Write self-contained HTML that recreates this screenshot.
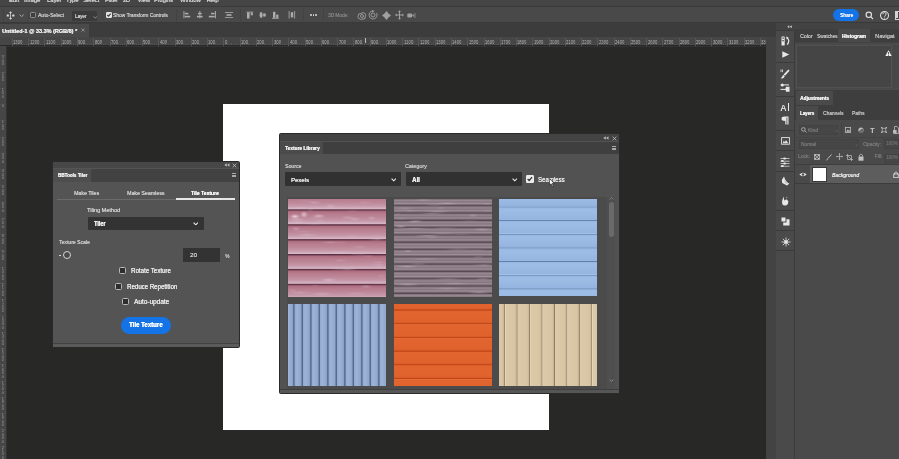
<!DOCTYPE html>
<html><head><meta charset="utf-8">
<style>
*{box-sizing:border-box;margin:0;padding:0}
html,body{width:899px;height:459px;overflow:hidden;background:#282827;font-family:"Liberation Sans",sans-serif;color:#ddd;position:relative}
.a{position:absolute}
.t{position:absolute;white-space:nowrap;line-height:1;text-shadow:0.25px 0 0 currentColor}
</style></head><body><div id="w" style="position:absolute;left:0;top:0;width:899px;height:459px;will-change:transform">
<div class="a" style="left:0px;top:0px;width:899px;height:6px;background:#454545"></div>
<div class="a" style="left:0px;top:5.5px;width:899px;height:1px;background:#3a3a3a"></div>
<div class="t" style="left:-11px;top:-2px;font-size:5.8px;color:#d4d4d4">File</div>
<div class="t" style="left:9px;top:-2px;font-size:5.8px;color:#d4d4d4">Edit</div>
<div class="t" style="left:24px;top:-2px;font-size:5.8px;color:#d4d4d4">Image</div>
<div class="t" style="left:47px;top:-2px;font-size:5.8px;color:#d4d4d4">Layer</div>
<div class="t" style="left:66px;top:-2px;font-size:5.8px;color:#d4d4d4">Type</div>
<div class="t" style="left:83px;top:-2px;font-size:5.8px;color:#d4d4d4">Select</div>
<div class="t" style="left:105px;top:-2px;font-size:5.8px;color:#d4d4d4">Filter</div>
<div class="t" style="left:122.5px;top:-2px;font-size:5.8px;color:#d4d4d4">3D</div>
<div class="t" style="left:137.5px;top:-2px;font-size:5.8px;color:#d4d4d4">View</div>
<div class="t" style="left:154px;top:-2px;font-size:5.8px;color:#d4d4d4">Plugins</div>
<div class="t" style="left:180px;top:-2px;font-size:5.8px;color:#d4d4d4">Window</div>
<div class="t" style="left:206.5px;top:-2px;font-size:5.8px;color:#d4d4d4">Help</div>
<div class="a" style="left:0px;top:6.5px;width:899px;height:16px;background:#494949"></div>
<div class="a" style="left:0px;top:22.3px;width:899px;height:1px;background:#393939"></div>
<div class="a" style="left:3px;top:9px;width:1px;height:12px;background:#424242"></div>
<div class="a" style="left:27.5px;top:9px;width:1px;height:12px;background:#424242"></div>
<div class="a" style="left:101.5px;top:9px;width:1px;height:12px;background:#444"></div>
<div class="a" style="left:176px;top:9px;width:1px;height:12px;background:#424242"></div>
<div class="a" style="left:240px;top:9px;width:1px;height:12px;background:#424242"></div>
<div class="a" style="left:302.5px;top:9px;width:1px;height:12px;background:#424242"></div>
<div class="a" style="left:322.5px;top:9px;width:1px;height:12px;background:#424242"></div>
<svg class="a" style="left:6px;top:10.5px;" width="9" height="9" viewBox="0 0 9 9"><g fill="#dadada"><rect x="4.15" y="1.6" width="0.8" height="5.8"/><path d="M4.55 0.2 L3 2 L6.1 2Z M4.55 8.8 L3 7 L6.1 7Z"/><rect x="0.7" y="3.6" width="2.2" height="1.9" rx="0.3"/><rect x="6.2" y="3.6" width="2.2" height="1.9" rx="0.3"/></g></svg>
<svg class="a" style="left:18.7px;top:13.8px;" width="5.4" height="3.6" viewBox="0 0 5.4 3.6"><path d="M0.6 0.6 L2.7 2.6 L4.800000000000001 0.6" stroke="#b0b0b0" stroke-width="0.9" fill="none"/></svg>
<div class="a" style="left:30.3px;top:12px;width:5.7px;height:5.6px;border:0.9px solid #8c8c8c;border-radius:1.2px;background:#3e3e3e"></div>
<div class="t" style="left:38px;top:13px;font-size:5.08px;transform-origin:0 0;transform:scaleX(0.99);color:#cccccc">Auto-Select</div>
<div class="a" style="left:71.8px;top:10.8px;width:25.1px;height:10.1px;background:#3b3b3b;border-radius:1px"></div>
<div class="t" style="left:75.4px;top:15px;font-size:4.66px;transform-origin:0 0;transform:scaleX(0.978);color:#dadada">Layer</div>
<svg class="a" style="left:92.5px;top:15.6px;" width="4.5" height="3" viewBox="0 0 4.5 3"><path d="M0.6 0.6 L2.25 2 L3.9 0.6" stroke="#a8a8a8" stroke-width="0.8" fill="none"/></svg>
<div class="a" style="left:105.8px;top:12px;width:5.8px;height:5.6px;background:#e4e4e4;border-radius:1.2px"></div>
<svg class="a" style="left:105.8px;top:12px;" width="6" height="6" viewBox="0 0 6 6"><path d="M1.3 2.9 L2.5 4.2 L4.7 1.6" stroke="#3a3a3a" stroke-width="1.1" fill="none"/></svg>
<div class="t" style="left:113.3px;top:13px;font-size:5.08px;transform-origin:0 0;transform:scaleX(0.955);color:#cecece">Show Transform Controls</div>
<svg class="a" style="left:0px;top:0px;" width="899" height="23" viewBox="0 0 899 23"><rect x="183.5" y="11" width="0.9" height="7.3" fill="#adadad"/><rect x="184.8" y="12.8" width="3.6" height="1.5" fill="#adadad"/><rect x="184.8" y="15.8" width="5.4" height="1.6" fill="#adadad"/><rect x="199.4" y="11" width="0.9" height="7.3" fill="#adadad"/><rect x="198" y="12.8" width="3.7" height="1.5" fill="#adadad"/><rect x="196.9" y="15.8" width="5.7" height="1.6" fill="#adadad"/><rect x="215" y="11" width="0.9" height="7.3" fill="#adadad"/><rect x="211" y="12.8" width="3.7" height="1.5" fill="#adadad"/><rect x="208.8" y="15.8" width="5.9" height="1.6" fill="#adadad"/><rect x="225" y="12" width="8.1" height="0.8" fill="#adadad"/><rect x="226.5" y="14.2" width="5" height="1.6" fill="#adadad"/><rect x="225" y="17" width="8.1" height="0.8" fill="#adadad"/><rect x="246.4" y="11.7" width="6.8" height="0.8" fill="#adadad"/><rect x="247" y="12.5" width="2.6" height="6" fill="#adadad"/><rect x="250.8" y="12.5" width="2" height="2.8" fill="#adadad"/><rect x="259.1" y="14.6" width="6.9" height="0.8" fill="#adadad"/><rect x="259.9" y="12.3" width="2.4" height="5.3" fill="#adadad"/><rect x="263.3" y="13.4" width="2.2" height="3.2" fill="#adadad"/><rect x="272" y="17.9" width="6.8" height="0.8" fill="#adadad"/><rect x="273" y="11.8" width="2.4" height="6.1" fill="#adadad"/><rect x="276.2" y="14.6" width="2.2" height="3.3" fill="#adadad"/><rect x="288.7" y="11" width="0.8" height="7.5" fill="#adadad"/><rect x="290.8" y="12.2" width="2.4" height="5.2" fill="#adadad"/><rect x="294.3" y="11" width="0.8" height="7.5" fill="#adadad"/></svg>
<div class="a" style="left:310.2px;top:13.9px;width:1.9px;height:1.9px;background:#dadada;border-radius:1px"></div>
<div class="a" style="left:312.6px;top:13.9px;width:1.9px;height:1.9px;background:#dadada;border-radius:1px"></div>
<div class="a" style="left:315.0px;top:13.9px;width:1.9px;height:1.9px;background:#dadada;border-radius:1px"></div>
<div class="t" style="left:327.5px;top:14px;font-size:4.8px;transform-origin:0 0;transform:scaleX(0.986);color:#858585">3D Mode:</div>
<svg class="a" style="left:356.5px;top:10.5px;" width="10" height="9" viewBox="0 0 10 9"><g fill="none" stroke="#a0a0a0" stroke-width="0.9"><path d="M1 5.5 Q1 2 4 2.5 Q6 0.5 8 2.5 Q9.5 4 8 6 Q9 8.5 6 8 Q3.5 9 2 7.5 Q0.5 7 1 5.5Z"/><circle cx="5" cy="5" r="1.5"/></g></svg>
<svg class="a" style="left:368px;top:10px;" width="10" height="10" viewBox="0 0 10 10"><g fill="none" stroke="#a0a0a0" stroke-width="0.9"><path d="M8.5 3 A4 4 0 1 1 5 1"/><circle cx="5" cy="5" r="2"/></g><path d="M4 0 L6.5 1 L4.3 2.4Z" fill="#a0a0a0"/></svg>
<svg class="a" style="left:382px;top:10.5px;" width="9" height="9" viewBox="0 0 9 9"><g fill="#a0a0a0"><path d="M4.5 0 L6.5 2.5 L9 4.5 L6.5 6.5 L4.5 9 L2.5 6.5 L0 4.5 L2.5 2.5Z"/></g></svg>
<svg class="a" style="left:394.5px;top:10px;" width="9" height="10" viewBox="0 0 9 10"><g fill="#a0a0a0"><rect x="4" y="2" width="1" height="6"/><rect x="1.5" y="4.5" width="6" height="1"/><path d="M4.5 0.2 L3 2 L6 2Z M4.5 9.8 L3 8 L6 8Z M0 5 L1.8 3.5 L1.8 6.5Z M9 5 L7.2 3.5 L7.2 6.5Z"/></g></svg>
<svg class="a" style="left:407px;top:11.5px;" width="9" height="7" viewBox="0 0 9 7"><g fill="#a0a0a0"><rect x="0.3" y="1.5" width="4.8" height="4" rx="1"/><path d="M5 3.5 L6.8 2 L6.8 5Z"/><rect x="7.6" y="1" width="0.7" height="5"/></g></svg>
<div class="a" style="left:833.2px;top:9px;width:26.2px;height:12.2px;background:#1473e6;border-radius:6.1px"></div>
<div class="t" style="left:839.6px;top:13px;font-size:5.76px;transform-origin:0 0;transform:scaleX(0.86);color:#fff">Share</div>
<svg class="a" style="left:864.5px;top:11px;" width="9" height="9" viewBox="0 0 9 9"><g fill="none" stroke="#e0e0e0" stroke-width="1.15"><circle cx="3.8" cy="3.8" r="2.7"/><line x1="5.8" y1="5.8" x2="8" y2="8"/></g></svg>
<svg class="a" style="left:878.7px;top:9.6px;" width="11" height="11" viewBox="0 0 11 11"><circle cx="5.5" cy="5.5" r="4" fill="none" stroke="#e0e0e0" stroke-width="1.05"/><path d="M3.8 4.2 Q3.8 2.6 5.5 2.6 Q7.2 2.6 7.2 4.1 Q7.2 5 6 5.6 L5.6 6.8" stroke="#dedede" stroke-width="0.9" fill="none"/><rect x="5.1" y="7.6" width="0.9" height="0.9" fill="#dedede"/></svg>
<div class="a" style="left:894.5px;top:10.5px;width:6px;height:9px;border:0.9px solid #d4d4d4"></div>
<div class="a" style="left:896px;top:12px;width:1.5px;height:6px;background:#d4d4d4"></div>
<div class="a" style="left:0px;top:23.2px;width:776px;height:14px;background:#3c3c3c"></div>
<div class="a" style="left:0px;top:23.5px;width:88.6px;height:13.4px;background:#4a4a4a"></div>
<div class="t" style="left:2.1px;top:28px;font-size:6.04px;transform-origin:0 0;transform:scaleX(0.913);color:#ececec;font-weight:bold">Untitled-1 @ 33.3% (RGB/8) *</div>
<svg class="a" style="left:80.6px;top:28.4px;" width="4" height="4" viewBox="0 0 4 4"><path d="M0.5 0.5 L3.5 3.5 M3.5 0.5 L0.5 3.5" stroke="#a8a8a8" stroke-width="0.7"/></svg>
<div class="a" style="left:0px;top:37.3px;width:766px;height:8.2px;background:#464646"></div>
<div class="a" style="left:0px;top:45.8px;width:766px;height:0.6px;background:#333"></div>
<div class="a" style="left:0px;top:46px;width:6.1px;height:413px;background:#464646"></div>
<div class="a" style="left:6.1px;top:46px;width:0.8px;height:413px;background:#333"></div>
<div class="a" style="left:11.97px;top:37.5px;width:0.7px;height:8px;background:#575757"></div>
<div class="t" style="left:13.37px;top:41px;font-size:4.66px;transform-origin:0 0;transform:scaleX(0.9);color:#b4b4b4;text-shadow:none">1300</div>
<div class="a" style="left:14.0px;top:44.1px;width:0.6px;height:1.4px;background:#555555"></div>
<div class="a" style="left:16.03px;top:44.1px;width:0.6px;height:1.4px;background:#555555"></div>
<div class="a" style="left:18.07px;top:44.1px;width:0.6px;height:1.4px;background:#555555"></div>
<div class="a" style="left:20.1px;top:43.3px;width:0.6px;height:2.2px;background:#555555"></div>
<div class="a" style="left:22.13px;top:44.1px;width:0.6px;height:1.4px;background:#555555"></div>
<div class="a" style="left:24.16px;top:44.1px;width:0.6px;height:1.4px;background:#555555"></div>
<div class="a" style="left:26.2px;top:44.1px;width:0.6px;height:1.4px;background:#555555"></div>
<div class="a" style="left:28.23px;top:37.5px;width:0.7px;height:8px;background:#575757"></div>
<div class="t" style="left:29.63px;top:41px;font-size:4.66px;transform-origin:0 0;transform:scaleX(0.9);color:#b4b4b4;text-shadow:none">1200</div>
<div class="a" style="left:30.26px;top:44.1px;width:0.6px;height:1.4px;background:#555555"></div>
<div class="a" style="left:32.29px;top:44.1px;width:0.6px;height:1.4px;background:#555555"></div>
<div class="a" style="left:34.33px;top:44.1px;width:0.6px;height:1.4px;background:#555555"></div>
<div class="a" style="left:36.36px;top:43.3px;width:0.6px;height:2.2px;background:#555555"></div>
<div class="a" style="left:38.39px;top:44.1px;width:0.6px;height:1.4px;background:#555555"></div>
<div class="a" style="left:40.42px;top:44.1px;width:0.6px;height:1.4px;background:#555555"></div>
<div class="a" style="left:42.46px;top:44.1px;width:0.6px;height:1.4px;background:#555555"></div>
<div class="a" style="left:44.49px;top:37.5px;width:0.7px;height:8px;background:#575757"></div>
<div class="t" style="left:45.89px;top:41px;font-size:4.66px;transform-origin:0 0;transform:scaleX(0.931);color:#b4b4b4;text-shadow:none">1100</div>
<div class="a" style="left:46.52px;top:44.1px;width:0.6px;height:1.4px;background:#555555"></div>
<div class="a" style="left:48.55px;top:44.1px;width:0.6px;height:1.4px;background:#555555"></div>
<div class="a" style="left:50.59px;top:44.1px;width:0.6px;height:1.4px;background:#555555"></div>
<div class="a" style="left:52.62px;top:43.3px;width:0.6px;height:2.2px;background:#555555"></div>
<div class="a" style="left:54.65px;top:44.1px;width:0.6px;height:1.4px;background:#555555"></div>
<div class="a" style="left:56.68px;top:44.1px;width:0.6px;height:1.4px;background:#555555"></div>
<div class="a" style="left:58.72px;top:44.1px;width:0.6px;height:1.4px;background:#555555"></div>
<div class="a" style="left:60.75px;top:37.5px;width:0.7px;height:8px;background:#575757"></div>
<div class="t" style="left:62.15px;top:41px;font-size:4.66px;transform-origin:0 0;transform:scaleX(0.9);color:#b4b4b4;text-shadow:none">1000</div>
<div class="a" style="left:62.78px;top:44.1px;width:0.6px;height:1.4px;background:#555555"></div>
<div class="a" style="left:64.81px;top:44.1px;width:0.6px;height:1.4px;background:#555555"></div>
<div class="a" style="left:66.85px;top:44.1px;width:0.6px;height:1.4px;background:#555555"></div>
<div class="a" style="left:68.88px;top:43.3px;width:0.6px;height:2.2px;background:#555555"></div>
<div class="a" style="left:70.91px;top:44.1px;width:0.6px;height:1.4px;background:#555555"></div>
<div class="a" style="left:72.94px;top:44.1px;width:0.6px;height:1.4px;background:#555555"></div>
<div class="a" style="left:74.98px;top:44.1px;width:0.6px;height:1.4px;background:#555555"></div>
<div class="a" style="left:77.01px;top:37.5px;width:0.7px;height:8px;background:#575757"></div>
<div class="t" style="left:78.41px;top:41px;font-size:4.66px;transform-origin:0 0;transform:scaleX(0.898);color:#b4b4b4;text-shadow:none">900</div>
<div class="a" style="left:79.04px;top:44.1px;width:0.6px;height:1.4px;background:#555555"></div>
<div class="a" style="left:81.07px;top:44.1px;width:0.6px;height:1.4px;background:#555555"></div>
<div class="a" style="left:83.11px;top:44.1px;width:0.6px;height:1.4px;background:#555555"></div>
<div class="a" style="left:85.14px;top:43.3px;width:0.6px;height:2.2px;background:#555555"></div>
<div class="a" style="left:87.17px;top:44.1px;width:0.6px;height:1.4px;background:#555555"></div>
<div class="a" style="left:89.2px;top:44.1px;width:0.6px;height:1.4px;background:#555555"></div>
<div class="a" style="left:91.24px;top:44.1px;width:0.6px;height:1.4px;background:#555555"></div>
<div class="a" style="left:93.27px;top:37.5px;width:0.7px;height:8px;background:#575757"></div>
<div class="t" style="left:94.67px;top:41px;font-size:4.66px;transform-origin:0 0;transform:scaleX(0.898);color:#b4b4b4;text-shadow:none">800</div>
<div class="a" style="left:95.3px;top:44.1px;width:0.6px;height:1.4px;background:#555555"></div>
<div class="a" style="left:97.33px;top:44.1px;width:0.6px;height:1.4px;background:#555555"></div>
<div class="a" style="left:99.37px;top:44.1px;width:0.6px;height:1.4px;background:#555555"></div>
<div class="a" style="left:101.4px;top:43.3px;width:0.6px;height:2.2px;background:#555555"></div>
<div class="a" style="left:103.43px;top:44.1px;width:0.6px;height:1.4px;background:#555555"></div>
<div class="a" style="left:105.46px;top:44.1px;width:0.6px;height:1.4px;background:#555555"></div>
<div class="a" style="left:107.5px;top:44.1px;width:0.6px;height:1.4px;background:#555555"></div>
<div class="a" style="left:109.53px;top:37.5px;width:0.7px;height:8px;background:#575757"></div>
<div class="t" style="left:110.93px;top:41px;font-size:4.66px;transform-origin:0 0;transform:scaleX(0.898);color:#b4b4b4;text-shadow:none">700</div>
<div class="a" style="left:111.56px;top:44.1px;width:0.6px;height:1.4px;background:#555555"></div>
<div class="a" style="left:113.59px;top:44.1px;width:0.6px;height:1.4px;background:#555555"></div>
<div class="a" style="left:115.63px;top:44.1px;width:0.6px;height:1.4px;background:#555555"></div>
<div class="a" style="left:117.66px;top:43.3px;width:0.6px;height:2.2px;background:#555555"></div>
<div class="a" style="left:119.69px;top:44.1px;width:0.6px;height:1.4px;background:#555555"></div>
<div class="a" style="left:121.72px;top:44.1px;width:0.6px;height:1.4px;background:#555555"></div>
<div class="a" style="left:123.76px;top:44.1px;width:0.6px;height:1.4px;background:#555555"></div>
<div class="a" style="left:125.79px;top:37.5px;width:0.7px;height:8px;background:#575757"></div>
<div class="t" style="left:127.19px;top:41px;font-size:4.66px;transform-origin:0 0;transform:scaleX(0.898);color:#b4b4b4;text-shadow:none">600</div>
<div class="a" style="left:127.82px;top:44.1px;width:0.6px;height:1.4px;background:#555555"></div>
<div class="a" style="left:129.85px;top:44.1px;width:0.6px;height:1.4px;background:#555555"></div>
<div class="a" style="left:131.89px;top:44.1px;width:0.6px;height:1.4px;background:#555555"></div>
<div class="a" style="left:133.92px;top:43.3px;width:0.6px;height:2.2px;background:#555555"></div>
<div class="a" style="left:135.95px;top:44.1px;width:0.6px;height:1.4px;background:#555555"></div>
<div class="a" style="left:137.98px;top:44.1px;width:0.6px;height:1.4px;background:#555555"></div>
<div class="a" style="left:140.02px;top:44.1px;width:0.6px;height:1.4px;background:#555555"></div>
<div class="a" style="left:142.05px;top:37.5px;width:0.7px;height:8px;background:#575757"></div>
<div class="t" style="left:143.45px;top:41px;font-size:4.66px;transform-origin:0 0;transform:scaleX(0.898);color:#b4b4b4;text-shadow:none">500</div>
<div class="a" style="left:144.08px;top:44.1px;width:0.6px;height:1.4px;background:#555555"></div>
<div class="a" style="left:146.11px;top:44.1px;width:0.6px;height:1.4px;background:#555555"></div>
<div class="a" style="left:148.15px;top:44.1px;width:0.6px;height:1.4px;background:#555555"></div>
<div class="a" style="left:150.18px;top:43.3px;width:0.6px;height:2.2px;background:#555555"></div>
<div class="a" style="left:152.21px;top:44.1px;width:0.6px;height:1.4px;background:#555555"></div>
<div class="a" style="left:154.24px;top:44.1px;width:0.6px;height:1.4px;background:#555555"></div>
<div class="a" style="left:156.28px;top:44.1px;width:0.6px;height:1.4px;background:#555555"></div>
<div class="a" style="left:158.31px;top:37.5px;width:0.7px;height:8px;background:#575757"></div>
<div class="t" style="left:159.71px;top:41px;font-size:4.66px;transform-origin:0 0;transform:scaleX(0.898);color:#b4b4b4;text-shadow:none">400</div>
<div class="a" style="left:160.34px;top:44.1px;width:0.6px;height:1.4px;background:#555555"></div>
<div class="a" style="left:162.38px;top:44.1px;width:0.6px;height:1.4px;background:#555555"></div>
<div class="a" style="left:164.41px;top:44.1px;width:0.6px;height:1.4px;background:#555555"></div>
<div class="a" style="left:166.44px;top:43.3px;width:0.6px;height:2.2px;background:#555555"></div>
<div class="a" style="left:168.47px;top:44.1px;width:0.6px;height:1.4px;background:#555555"></div>
<div class="a" style="left:170.5px;top:44.1px;width:0.6px;height:1.4px;background:#555555"></div>
<div class="a" style="left:172.54px;top:44.1px;width:0.6px;height:1.4px;background:#555555"></div>
<div class="a" style="left:174.57px;top:37.5px;width:0.7px;height:8px;background:#575757"></div>
<div class="t" style="left:175.97px;top:41px;font-size:4.66px;transform-origin:0 0;transform:scaleX(0.898);color:#b4b4b4;text-shadow:none">300</div>
<div class="a" style="left:176.6px;top:44.1px;width:0.6px;height:1.4px;background:#555555"></div>
<div class="a" style="left:178.63px;top:44.1px;width:0.6px;height:1.4px;background:#555555"></div>
<div class="a" style="left:180.67px;top:44.1px;width:0.6px;height:1.4px;background:#555555"></div>
<div class="a" style="left:182.7px;top:43.3px;width:0.6px;height:2.2px;background:#555555"></div>
<div class="a" style="left:184.73px;top:44.1px;width:0.6px;height:1.4px;background:#555555"></div>
<div class="a" style="left:186.76px;top:44.1px;width:0.6px;height:1.4px;background:#555555"></div>
<div class="a" style="left:188.8px;top:44.1px;width:0.6px;height:1.4px;background:#555555"></div>
<div class="a" style="left:190.83px;top:37.5px;width:0.7px;height:8px;background:#575757"></div>
<div class="t" style="left:192.23px;top:41px;font-size:4.66px;transform-origin:0 0;transform:scaleX(0.898);color:#b4b4b4;text-shadow:none">200</div>
<div class="a" style="left:192.86px;top:44.1px;width:0.6px;height:1.4px;background:#555555"></div>
<div class="a" style="left:194.89px;top:44.1px;width:0.6px;height:1.4px;background:#555555"></div>
<div class="a" style="left:196.93px;top:44.1px;width:0.6px;height:1.4px;background:#555555"></div>
<div class="a" style="left:198.96px;top:43.3px;width:0.6px;height:2.2px;background:#555555"></div>
<div class="a" style="left:200.99px;top:44.1px;width:0.6px;height:1.4px;background:#555555"></div>
<div class="a" style="left:203.02px;top:44.1px;width:0.6px;height:1.4px;background:#555555"></div>
<div class="a" style="left:205.06px;top:44.1px;width:0.6px;height:1.4px;background:#555555"></div>
<div class="a" style="left:207.09px;top:37.5px;width:0.7px;height:8px;background:#575757"></div>
<div class="t" style="left:208.49px;top:41px;font-size:4.66px;transform-origin:0 0;transform:scaleX(0.898);color:#b4b4b4;text-shadow:none">100</div>
<div class="a" style="left:209.12px;top:44.1px;width:0.6px;height:1.4px;background:#555555"></div>
<div class="a" style="left:211.16px;top:44.1px;width:0.6px;height:1.4px;background:#555555"></div>
<div class="a" style="left:213.19px;top:44.1px;width:0.6px;height:1.4px;background:#555555"></div>
<div class="a" style="left:215.22px;top:43.3px;width:0.6px;height:2.2px;background:#555555"></div>
<div class="a" style="left:217.25px;top:44.1px;width:0.6px;height:1.4px;background:#555555"></div>
<div class="a" style="left:219.28px;top:44.1px;width:0.6px;height:1.4px;background:#555555"></div>
<div class="a" style="left:221.32px;top:44.1px;width:0.6px;height:1.4px;background:#555555"></div>
<div class="a" style="left:223.35px;top:37.5px;width:0.7px;height:8px;background:#575757"></div>
<div class="t" style="left:224.75px;top:41px;font-size:4.66px;transform-origin:0 0;transform:scaleX(0.898);color:#b4b4b4;text-shadow:none">0</div>
<div class="a" style="left:225.38px;top:44.1px;width:0.6px;height:1.4px;background:#555555"></div>
<div class="a" style="left:227.41px;top:44.1px;width:0.6px;height:1.4px;background:#555555"></div>
<div class="a" style="left:229.45px;top:44.1px;width:0.6px;height:1.4px;background:#555555"></div>
<div class="a" style="left:231.48px;top:43.3px;width:0.6px;height:2.2px;background:#555555"></div>
<div class="a" style="left:233.51px;top:44.1px;width:0.6px;height:1.4px;background:#555555"></div>
<div class="a" style="left:235.54px;top:44.1px;width:0.6px;height:1.4px;background:#555555"></div>
<div class="a" style="left:237.58px;top:44.1px;width:0.6px;height:1.4px;background:#555555"></div>
<div class="a" style="left:239.61px;top:37.5px;width:0.7px;height:8px;background:#575757"></div>
<div class="t" style="left:241.01px;top:41px;font-size:4.66px;transform-origin:0 0;transform:scaleX(0.898);color:#b4b4b4;text-shadow:none">100</div>
<div class="a" style="left:241.64px;top:44.1px;width:0.6px;height:1.4px;background:#555555"></div>
<div class="a" style="left:243.67px;top:44.1px;width:0.6px;height:1.4px;background:#555555"></div>
<div class="a" style="left:245.71px;top:44.1px;width:0.6px;height:1.4px;background:#555555"></div>
<div class="a" style="left:247.74px;top:43.3px;width:0.6px;height:2.2px;background:#555555"></div>
<div class="a" style="left:249.77px;top:44.1px;width:0.6px;height:1.4px;background:#555555"></div>
<div class="a" style="left:251.8px;top:44.1px;width:0.6px;height:1.4px;background:#555555"></div>
<div class="a" style="left:253.84px;top:44.1px;width:0.6px;height:1.4px;background:#555555"></div>
<div class="a" style="left:255.87px;top:37.5px;width:0.7px;height:8px;background:#575757"></div>
<div class="t" style="left:257.27px;top:41px;font-size:4.66px;transform-origin:0 0;transform:scaleX(0.898);color:#b4b4b4;text-shadow:none">200</div>
<div class="a" style="left:257.9px;top:44.1px;width:0.6px;height:1.4px;background:#555555"></div>
<div class="a" style="left:259.94px;top:44.1px;width:0.6px;height:1.4px;background:#555555"></div>
<div class="a" style="left:261.97px;top:44.1px;width:0.6px;height:1.4px;background:#555555"></div>
<div class="a" style="left:264.0px;top:43.3px;width:0.6px;height:2.2px;background:#555555"></div>
<div class="a" style="left:266.03px;top:44.1px;width:0.6px;height:1.4px;background:#555555"></div>
<div class="a" style="left:268.06px;top:44.1px;width:0.6px;height:1.4px;background:#555555"></div>
<div class="a" style="left:270.1px;top:44.1px;width:0.6px;height:1.4px;background:#555555"></div>
<div class="a" style="left:272.13px;top:37.5px;width:0.7px;height:8px;background:#575757"></div>
<div class="t" style="left:273.53px;top:41px;font-size:4.66px;transform-origin:0 0;transform:scaleX(0.898);color:#b4b4b4;text-shadow:none">300</div>
<div class="a" style="left:274.16px;top:44.1px;width:0.6px;height:1.4px;background:#555555"></div>
<div class="a" style="left:276.19px;top:44.1px;width:0.6px;height:1.4px;background:#555555"></div>
<div class="a" style="left:278.23px;top:44.1px;width:0.6px;height:1.4px;background:#555555"></div>
<div class="a" style="left:280.26px;top:43.3px;width:0.6px;height:2.2px;background:#555555"></div>
<div class="a" style="left:282.29px;top:44.1px;width:0.6px;height:1.4px;background:#555555"></div>
<div class="a" style="left:284.32px;top:44.1px;width:0.6px;height:1.4px;background:#555555"></div>
<div class="a" style="left:286.36px;top:44.1px;width:0.6px;height:1.4px;background:#555555"></div>
<div class="a" style="left:288.39px;top:37.5px;width:0.7px;height:8px;background:#575757"></div>
<div class="t" style="left:289.79px;top:41px;font-size:4.66px;transform-origin:0 0;transform:scaleX(0.898);color:#b4b4b4;text-shadow:none">400</div>
<div class="a" style="left:290.42px;top:44.1px;width:0.6px;height:1.4px;background:#555555"></div>
<div class="a" style="left:292.45px;top:44.1px;width:0.6px;height:1.4px;background:#555555"></div>
<div class="a" style="left:294.49px;top:44.1px;width:0.6px;height:1.4px;background:#555555"></div>
<div class="a" style="left:296.52px;top:43.3px;width:0.6px;height:2.2px;background:#555555"></div>
<div class="a" style="left:298.55px;top:44.1px;width:0.6px;height:1.4px;background:#555555"></div>
<div class="a" style="left:300.58px;top:44.1px;width:0.6px;height:1.4px;background:#555555"></div>
<div class="a" style="left:302.62px;top:44.1px;width:0.6px;height:1.4px;background:#555555"></div>
<div class="a" style="left:304.65px;top:37.5px;width:0.7px;height:8px;background:#575757"></div>
<div class="t" style="left:306.05px;top:41px;font-size:4.66px;transform-origin:0 0;transform:scaleX(0.898);color:#b4b4b4;text-shadow:none">500</div>
<div class="a" style="left:306.68px;top:44.1px;width:0.6px;height:1.4px;background:#555555"></div>
<div class="a" style="left:308.71px;top:44.1px;width:0.6px;height:1.4px;background:#555555"></div>
<div class="a" style="left:310.75px;top:44.1px;width:0.6px;height:1.4px;background:#555555"></div>
<div class="a" style="left:312.78px;top:43.3px;width:0.6px;height:2.2px;background:#555555"></div>
<div class="a" style="left:314.81px;top:44.1px;width:0.6px;height:1.4px;background:#555555"></div>
<div class="a" style="left:316.84px;top:44.1px;width:0.6px;height:1.4px;background:#555555"></div>
<div class="a" style="left:318.88px;top:44.1px;width:0.6px;height:1.4px;background:#555555"></div>
<div class="a" style="left:320.91px;top:37.5px;width:0.7px;height:8px;background:#575757"></div>
<div class="t" style="left:322.31px;top:41px;font-size:4.66px;transform-origin:0 0;transform:scaleX(0.898);color:#b4b4b4;text-shadow:none">600</div>
<div class="a" style="left:322.94px;top:44.1px;width:0.6px;height:1.4px;background:#555555"></div>
<div class="a" style="left:324.97px;top:44.1px;width:0.6px;height:1.4px;background:#555555"></div>
<div class="a" style="left:327.01px;top:44.1px;width:0.6px;height:1.4px;background:#555555"></div>
<div class="a" style="left:329.04px;top:43.3px;width:0.6px;height:2.2px;background:#555555"></div>
<div class="a" style="left:331.07px;top:44.1px;width:0.6px;height:1.4px;background:#555555"></div>
<div class="a" style="left:333.1px;top:44.1px;width:0.6px;height:1.4px;background:#555555"></div>
<div class="a" style="left:335.14px;top:44.1px;width:0.6px;height:1.4px;background:#555555"></div>
<div class="a" style="left:337.17px;top:37.5px;width:0.7px;height:8px;background:#575757"></div>
<div class="t" style="left:338.57px;top:41px;font-size:4.66px;transform-origin:0 0;transform:scaleX(0.898);color:#b4b4b4;text-shadow:none">700</div>
<div class="a" style="left:339.2px;top:44.1px;width:0.6px;height:1.4px;background:#555555"></div>
<div class="a" style="left:341.24px;top:44.1px;width:0.6px;height:1.4px;background:#555555"></div>
<div class="a" style="left:343.27px;top:44.1px;width:0.6px;height:1.4px;background:#555555"></div>
<div class="a" style="left:345.3px;top:43.3px;width:0.6px;height:2.2px;background:#555555"></div>
<div class="a" style="left:347.33px;top:44.1px;width:0.6px;height:1.4px;background:#555555"></div>
<div class="a" style="left:349.37px;top:44.1px;width:0.6px;height:1.4px;background:#555555"></div>
<div class="a" style="left:351.4px;top:44.1px;width:0.6px;height:1.4px;background:#555555"></div>
<div class="a" style="left:353.43px;top:37.5px;width:0.7px;height:8px;background:#575757"></div>
<div class="t" style="left:354.83px;top:41px;font-size:4.66px;transform-origin:0 0;transform:scaleX(0.898);color:#b4b4b4;text-shadow:none">800</div>
<div class="a" style="left:355.46px;top:44.1px;width:0.6px;height:1.4px;background:#555555"></div>
<div class="a" style="left:357.5px;top:44.1px;width:0.6px;height:1.4px;background:#555555"></div>
<div class="a" style="left:359.53px;top:44.1px;width:0.6px;height:1.4px;background:#555555"></div>
<div class="a" style="left:361.56px;top:43.3px;width:0.6px;height:2.2px;background:#555555"></div>
<div class="a" style="left:363.59px;top:44.1px;width:0.6px;height:1.4px;background:#555555"></div>
<div class="a" style="left:365.62px;top:44.1px;width:0.6px;height:1.4px;background:#555555"></div>
<div class="a" style="left:367.66px;top:44.1px;width:0.6px;height:1.4px;background:#555555"></div>
<div class="a" style="left:369.69px;top:37.5px;width:0.7px;height:8px;background:#575757"></div>
<div class="t" style="left:371.09px;top:41px;font-size:4.66px;transform-origin:0 0;transform:scaleX(0.898);color:#b4b4b4;text-shadow:none">900</div>
<div class="a" style="left:371.72px;top:44.1px;width:0.6px;height:1.4px;background:#555555"></div>
<div class="a" style="left:373.75px;top:44.1px;width:0.6px;height:1.4px;background:#555555"></div>
<div class="a" style="left:375.79px;top:44.1px;width:0.6px;height:1.4px;background:#555555"></div>
<div class="a" style="left:377.82px;top:43.3px;width:0.6px;height:2.2px;background:#555555"></div>
<div class="a" style="left:379.85px;top:44.1px;width:0.6px;height:1.4px;background:#555555"></div>
<div class="a" style="left:381.88px;top:44.1px;width:0.6px;height:1.4px;background:#555555"></div>
<div class="a" style="left:383.92px;top:44.1px;width:0.6px;height:1.4px;background:#555555"></div>
<div class="a" style="left:385.95px;top:37.5px;width:0.7px;height:8px;background:#575757"></div>
<div class="t" style="left:387.35px;top:41px;font-size:4.66px;transform-origin:0 0;transform:scaleX(0.9);color:#b4b4b4;text-shadow:none">1000</div>
<div class="a" style="left:387.98px;top:44.1px;width:0.6px;height:1.4px;background:#555555"></div>
<div class="a" style="left:390.02px;top:44.1px;width:0.6px;height:1.4px;background:#555555"></div>
<div class="a" style="left:392.05px;top:44.1px;width:0.6px;height:1.4px;background:#555555"></div>
<div class="a" style="left:394.08px;top:43.3px;width:0.6px;height:2.2px;background:#555555"></div>
<div class="a" style="left:396.11px;top:44.1px;width:0.6px;height:1.4px;background:#555555"></div>
<div class="a" style="left:398.15px;top:44.1px;width:0.6px;height:1.4px;background:#555555"></div>
<div class="a" style="left:400.18px;top:44.1px;width:0.6px;height:1.4px;background:#555555"></div>
<div class="a" style="left:402.21px;top:37.5px;width:0.7px;height:8px;background:#575757"></div>
<div class="t" style="left:403.61px;top:41px;font-size:4.66px;transform-origin:0 0;transform:scaleX(0.931);color:#b4b4b4;text-shadow:none">1100</div>
<div class="a" style="left:404.24px;top:44.1px;width:0.6px;height:1.4px;background:#555555"></div>
<div class="a" style="left:406.28px;top:44.1px;width:0.6px;height:1.4px;background:#555555"></div>
<div class="a" style="left:408.31px;top:44.1px;width:0.6px;height:1.4px;background:#555555"></div>
<div class="a" style="left:410.34px;top:43.3px;width:0.6px;height:2.2px;background:#555555"></div>
<div class="a" style="left:412.37px;top:44.1px;width:0.6px;height:1.4px;background:#555555"></div>
<div class="a" style="left:414.41px;top:44.1px;width:0.6px;height:1.4px;background:#555555"></div>
<div class="a" style="left:416.44px;top:44.1px;width:0.6px;height:1.4px;background:#555555"></div>
<div class="a" style="left:418.47px;top:37.5px;width:0.7px;height:8px;background:#575757"></div>
<div class="t" style="left:419.87px;top:41px;font-size:4.66px;transform-origin:0 0;transform:scaleX(0.9);color:#b4b4b4;text-shadow:none">1200</div>
<div class="a" style="left:420.5px;top:44.1px;width:0.6px;height:1.4px;background:#555555"></div>
<div class="a" style="left:422.54px;top:44.1px;width:0.6px;height:1.4px;background:#555555"></div>
<div class="a" style="left:424.57px;top:44.1px;width:0.6px;height:1.4px;background:#555555"></div>
<div class="a" style="left:426.6px;top:43.3px;width:0.6px;height:2.2px;background:#555555"></div>
<div class="a" style="left:428.63px;top:44.1px;width:0.6px;height:1.4px;background:#555555"></div>
<div class="a" style="left:430.67px;top:44.1px;width:0.6px;height:1.4px;background:#555555"></div>
<div class="a" style="left:432.7px;top:44.1px;width:0.6px;height:1.4px;background:#555555"></div>
<div class="a" style="left:434.73px;top:37.5px;width:0.7px;height:8px;background:#575757"></div>
<div class="t" style="left:436.13px;top:41px;font-size:4.66px;transform-origin:0 0;transform:scaleX(0.9);color:#b4b4b4;text-shadow:none">1300</div>
<div class="a" style="left:436.76px;top:44.1px;width:0.6px;height:1.4px;background:#555555"></div>
<div class="a" style="left:438.8px;top:44.1px;width:0.6px;height:1.4px;background:#555555"></div>
<div class="a" style="left:440.83px;top:44.1px;width:0.6px;height:1.4px;background:#555555"></div>
<div class="a" style="left:442.86px;top:43.3px;width:0.6px;height:2.2px;background:#555555"></div>
<div class="a" style="left:444.89px;top:44.1px;width:0.6px;height:1.4px;background:#555555"></div>
<div class="a" style="left:446.93px;top:44.1px;width:0.6px;height:1.4px;background:#555555"></div>
<div class="a" style="left:448.96px;top:44.1px;width:0.6px;height:1.4px;background:#555555"></div>
<div class="a" style="left:450.99px;top:37.5px;width:0.7px;height:8px;background:#575757"></div>
<div class="t" style="left:452.39px;top:41px;font-size:4.66px;transform-origin:0 0;transform:scaleX(0.9);color:#b4b4b4;text-shadow:none">1400</div>
<div class="a" style="left:453.02px;top:44.1px;width:0.6px;height:1.4px;background:#555555"></div>
<div class="a" style="left:455.06px;top:44.1px;width:0.6px;height:1.4px;background:#555555"></div>
<div class="a" style="left:457.09px;top:44.1px;width:0.6px;height:1.4px;background:#555555"></div>
<div class="a" style="left:459.12px;top:43.3px;width:0.6px;height:2.2px;background:#555555"></div>
<div class="a" style="left:461.15px;top:44.1px;width:0.6px;height:1.4px;background:#555555"></div>
<div class="a" style="left:463.19px;top:44.1px;width:0.6px;height:1.4px;background:#555555"></div>
<div class="a" style="left:465.22px;top:44.1px;width:0.6px;height:1.4px;background:#555555"></div>
<div class="a" style="left:467.25px;top:37.5px;width:0.7px;height:8px;background:#575757"></div>
<div class="t" style="left:468.65px;top:41px;font-size:4.66px;transform-origin:0 0;transform:scaleX(0.9);color:#b4b4b4;text-shadow:none">1500</div>
<div class="a" style="left:469.28px;top:44.1px;width:0.6px;height:1.4px;background:#555555"></div>
<div class="a" style="left:471.31px;top:44.1px;width:0.6px;height:1.4px;background:#555555"></div>
<div class="a" style="left:473.35px;top:44.1px;width:0.6px;height:1.4px;background:#555555"></div>
<div class="a" style="left:475.38px;top:43.3px;width:0.6px;height:2.2px;background:#555555"></div>
<div class="a" style="left:477.41px;top:44.1px;width:0.6px;height:1.4px;background:#555555"></div>
<div class="a" style="left:479.44px;top:44.1px;width:0.6px;height:1.4px;background:#555555"></div>
<div class="a" style="left:481.48px;top:44.1px;width:0.6px;height:1.4px;background:#555555"></div>
<div class="a" style="left:483.51px;top:37.5px;width:0.7px;height:8px;background:#575757"></div>
<div class="t" style="left:484.91px;top:41px;font-size:4.66px;transform-origin:0 0;transform:scaleX(0.9);color:#b4b4b4;text-shadow:none">1600</div>
<div class="a" style="left:485.54px;top:44.1px;width:0.6px;height:1.4px;background:#555555"></div>
<div class="a" style="left:487.57px;top:44.1px;width:0.6px;height:1.4px;background:#555555"></div>
<div class="a" style="left:489.61px;top:44.1px;width:0.6px;height:1.4px;background:#555555"></div>
<div class="a" style="left:491.64px;top:43.3px;width:0.6px;height:2.2px;background:#555555"></div>
<div class="a" style="left:493.67px;top:44.1px;width:0.6px;height:1.4px;background:#555555"></div>
<div class="a" style="left:495.7px;top:44.1px;width:0.6px;height:1.4px;background:#555555"></div>
<div class="a" style="left:497.74px;top:44.1px;width:0.6px;height:1.4px;background:#555555"></div>
<div class="a" style="left:499.77px;top:37.5px;width:0.7px;height:8px;background:#575757"></div>
<div class="t" style="left:501.17px;top:41px;font-size:4.66px;transform-origin:0 0;transform:scaleX(0.9);color:#b4b4b4;text-shadow:none">1700</div>
<div class="a" style="left:501.8px;top:44.1px;width:0.6px;height:1.4px;background:#555555"></div>
<div class="a" style="left:503.83px;top:44.1px;width:0.6px;height:1.4px;background:#555555"></div>
<div class="a" style="left:505.87px;top:44.1px;width:0.6px;height:1.4px;background:#555555"></div>
<div class="a" style="left:507.9px;top:43.3px;width:0.6px;height:2.2px;background:#555555"></div>
<div class="a" style="left:509.93px;top:44.1px;width:0.6px;height:1.4px;background:#555555"></div>
<div class="a" style="left:511.96px;top:44.1px;width:0.6px;height:1.4px;background:#555555"></div>
<div class="a" style="left:514.0px;top:44.1px;width:0.6px;height:1.4px;background:#555555"></div>
<div class="a" style="left:516.03px;top:37.5px;width:0.7px;height:8px;background:#575757"></div>
<div class="t" style="left:517.43px;top:41px;font-size:4.66px;transform-origin:0 0;transform:scaleX(0.9);color:#b4b4b4;text-shadow:none">1800</div>
<div class="a" style="left:518.06px;top:44.1px;width:0.6px;height:1.4px;background:#555555"></div>
<div class="a" style="left:520.1px;top:44.1px;width:0.6px;height:1.4px;background:#555555"></div>
<div class="a" style="left:522.13px;top:44.1px;width:0.6px;height:1.4px;background:#555555"></div>
<div class="a" style="left:524.16px;top:43.3px;width:0.6px;height:2.2px;background:#555555"></div>
<div class="a" style="left:526.19px;top:44.1px;width:0.6px;height:1.4px;background:#555555"></div>
<div class="a" style="left:528.23px;top:44.1px;width:0.6px;height:1.4px;background:#555555"></div>
<div class="a" style="left:530.26px;top:44.1px;width:0.6px;height:1.4px;background:#555555"></div>
<div class="a" style="left:532.29px;top:37.5px;width:0.7px;height:8px;background:#575757"></div>
<div class="t" style="left:533.69px;top:41px;font-size:4.66px;transform-origin:0 0;transform:scaleX(0.9);color:#b4b4b4;text-shadow:none">1900</div>
<div class="a" style="left:534.32px;top:44.1px;width:0.6px;height:1.4px;background:#555555"></div>
<div class="a" style="left:536.36px;top:44.1px;width:0.6px;height:1.4px;background:#555555"></div>
<div class="a" style="left:538.39px;top:44.1px;width:0.6px;height:1.4px;background:#555555"></div>
<div class="a" style="left:540.42px;top:43.3px;width:0.6px;height:2.2px;background:#555555"></div>
<div class="a" style="left:542.45px;top:44.1px;width:0.6px;height:1.4px;background:#555555"></div>
<div class="a" style="left:544.49px;top:44.1px;width:0.6px;height:1.4px;background:#555555"></div>
<div class="a" style="left:546.52px;top:44.1px;width:0.6px;height:1.4px;background:#555555"></div>
<div class="a" style="left:548.55px;top:37.5px;width:0.7px;height:8px;background:#575757"></div>
<div class="t" style="left:549.95px;top:41px;font-size:4.66px;transform-origin:0 0;transform:scaleX(0.9);color:#b4b4b4;text-shadow:none">2000</div>
<div class="a" style="left:550.58px;top:44.1px;width:0.6px;height:1.4px;background:#555555"></div>
<div class="a" style="left:552.62px;top:44.1px;width:0.6px;height:1.4px;background:#555555"></div>
<div class="a" style="left:554.65px;top:44.1px;width:0.6px;height:1.4px;background:#555555"></div>
<div class="a" style="left:556.68px;top:43.3px;width:0.6px;height:2.2px;background:#555555"></div>
<div class="a" style="left:558.71px;top:44.1px;width:0.6px;height:1.4px;background:#555555"></div>
<div class="a" style="left:560.75px;top:44.1px;width:0.6px;height:1.4px;background:#555555"></div>
<div class="a" style="left:562.78px;top:44.1px;width:0.6px;height:1.4px;background:#555555"></div>
<div class="a" style="left:564.81px;top:37.5px;width:0.7px;height:8px;background:#575757"></div>
<div class="t" style="left:566.21px;top:41px;font-size:4.66px;transform-origin:0 0;transform:scaleX(0.9);color:#b4b4b4;text-shadow:none">2100</div>
<div class="a" style="left:566.84px;top:44.1px;width:0.6px;height:1.4px;background:#555555"></div>
<div class="a" style="left:568.88px;top:44.1px;width:0.6px;height:1.4px;background:#555555"></div>
<div class="a" style="left:570.91px;top:44.1px;width:0.6px;height:1.4px;background:#555555"></div>
<div class="a" style="left:572.94px;top:43.3px;width:0.6px;height:2.2px;background:#555555"></div>
<div class="a" style="left:574.97px;top:44.1px;width:0.6px;height:1.4px;background:#555555"></div>
<div class="a" style="left:577.01px;top:44.1px;width:0.6px;height:1.4px;background:#555555"></div>
<div class="a" style="left:579.04px;top:44.1px;width:0.6px;height:1.4px;background:#555555"></div>
<div class="a" style="left:581.07px;top:37.5px;width:0.7px;height:8px;background:#575757"></div>
<div class="t" style="left:582.47px;top:41px;font-size:4.66px;transform-origin:0 0;transform:scaleX(0.9);color:#b4b4b4;text-shadow:none">2200</div>
<div class="a" style="left:583.1px;top:44.1px;width:0.6px;height:1.4px;background:#555555"></div>
<div class="a" style="left:585.14px;top:44.1px;width:0.6px;height:1.4px;background:#555555"></div>
<div class="a" style="left:587.17px;top:44.1px;width:0.6px;height:1.4px;background:#555555"></div>
<div class="a" style="left:589.2px;top:43.3px;width:0.6px;height:2.2px;background:#555555"></div>
<div class="a" style="left:591.23px;top:44.1px;width:0.6px;height:1.4px;background:#555555"></div>
<div class="a" style="left:593.27px;top:44.1px;width:0.6px;height:1.4px;background:#555555"></div>
<div class="a" style="left:595.3px;top:44.1px;width:0.6px;height:1.4px;background:#555555"></div>
<div class="a" style="left:597.33px;top:37.5px;width:0.7px;height:8px;background:#575757"></div>
<div class="t" style="left:598.73px;top:41px;font-size:4.66px;transform-origin:0 0;transform:scaleX(0.9);color:#b4b4b4;text-shadow:none">2300</div>
<div class="a" style="left:599.36px;top:44.1px;width:0.6px;height:1.4px;background:#555555"></div>
<div class="a" style="left:601.4px;top:44.1px;width:0.6px;height:1.4px;background:#555555"></div>
<div class="a" style="left:603.43px;top:44.1px;width:0.6px;height:1.4px;background:#555555"></div>
<div class="a" style="left:605.46px;top:43.3px;width:0.6px;height:2.2px;background:#555555"></div>
<div class="a" style="left:607.49px;top:44.1px;width:0.6px;height:1.4px;background:#555555"></div>
<div class="a" style="left:609.53px;top:44.1px;width:0.6px;height:1.4px;background:#555555"></div>
<div class="a" style="left:611.56px;top:44.1px;width:0.6px;height:1.4px;background:#555555"></div>
<div class="a" style="left:613.59px;top:37.5px;width:0.7px;height:8px;background:#575757"></div>
<div class="t" style="left:614.99px;top:41px;font-size:4.66px;transform-origin:0 0;transform:scaleX(0.9);color:#b4b4b4;text-shadow:none">2400</div>
<div class="a" style="left:615.62px;top:44.1px;width:0.6px;height:1.4px;background:#555555"></div>
<div class="a" style="left:617.66px;top:44.1px;width:0.6px;height:1.4px;background:#555555"></div>
<div class="a" style="left:619.69px;top:44.1px;width:0.6px;height:1.4px;background:#555555"></div>
<div class="a" style="left:621.72px;top:43.3px;width:0.6px;height:2.2px;background:#555555"></div>
<div class="a" style="left:623.75px;top:44.1px;width:0.6px;height:1.4px;background:#555555"></div>
<div class="a" style="left:625.79px;top:44.1px;width:0.6px;height:1.4px;background:#555555"></div>
<div class="a" style="left:627.82px;top:44.1px;width:0.6px;height:1.4px;background:#555555"></div>
<div class="a" style="left:629.85px;top:37.5px;width:0.7px;height:8px;background:#575757"></div>
<div class="t" style="left:631.25px;top:41px;font-size:4.66px;transform-origin:0 0;transform:scaleX(0.9);color:#b4b4b4;text-shadow:none">2500</div>
<div class="a" style="left:631.88px;top:44.1px;width:0.6px;height:1.4px;background:#555555"></div>
<div class="a" style="left:633.92px;top:44.1px;width:0.6px;height:1.4px;background:#555555"></div>
<div class="a" style="left:635.95px;top:44.1px;width:0.6px;height:1.4px;background:#555555"></div>
<div class="a" style="left:637.98px;top:43.3px;width:0.6px;height:2.2px;background:#555555"></div>
<div class="a" style="left:640.01px;top:44.1px;width:0.6px;height:1.4px;background:#555555"></div>
<div class="a" style="left:642.05px;top:44.1px;width:0.6px;height:1.4px;background:#555555"></div>
<div class="a" style="left:644.08px;top:44.1px;width:0.6px;height:1.4px;background:#555555"></div>
<div class="a" style="left:646.11px;top:37.5px;width:0.7px;height:8px;background:#575757"></div>
<div class="t" style="left:647.51px;top:41px;font-size:4.66px;transform-origin:0 0;transform:scaleX(0.9);color:#b4b4b4;text-shadow:none">2600</div>
<div class="a" style="left:648.14px;top:44.1px;width:0.6px;height:1.4px;background:#555555"></div>
<div class="a" style="left:650.18px;top:44.1px;width:0.6px;height:1.4px;background:#555555"></div>
<div class="a" style="left:652.21px;top:44.1px;width:0.6px;height:1.4px;background:#555555"></div>
<div class="a" style="left:654.24px;top:43.3px;width:0.6px;height:2.2px;background:#555555"></div>
<div class="a" style="left:656.27px;top:44.1px;width:0.6px;height:1.4px;background:#555555"></div>
<div class="a" style="left:658.31px;top:44.1px;width:0.6px;height:1.4px;background:#555555"></div>
<div class="a" style="left:660.34px;top:44.1px;width:0.6px;height:1.4px;background:#555555"></div>
<div class="a" style="left:662.37px;top:37.5px;width:0.7px;height:8px;background:#575757"></div>
<div class="t" style="left:663.77px;top:41px;font-size:4.66px;transform-origin:0 0;transform:scaleX(0.9);color:#b4b4b4;text-shadow:none">2700</div>
<div class="a" style="left:664.4px;top:44.1px;width:0.6px;height:1.4px;background:#555555"></div>
<div class="a" style="left:666.44px;top:44.1px;width:0.6px;height:1.4px;background:#555555"></div>
<div class="a" style="left:668.47px;top:44.1px;width:0.6px;height:1.4px;background:#555555"></div>
<div class="a" style="left:670.5px;top:43.3px;width:0.6px;height:2.2px;background:#555555"></div>
<div class="a" style="left:672.53px;top:44.1px;width:0.6px;height:1.4px;background:#555555"></div>
<div class="a" style="left:674.57px;top:44.1px;width:0.6px;height:1.4px;background:#555555"></div>
<div class="a" style="left:676.6px;top:44.1px;width:0.6px;height:1.4px;background:#555555"></div>
<div class="a" style="left:678.63px;top:37.5px;width:0.7px;height:8px;background:#575757"></div>
<div class="t" style="left:680.03px;top:41px;font-size:4.66px;transform-origin:0 0;transform:scaleX(0.9);color:#b4b4b4;text-shadow:none">2800</div>
<div class="a" style="left:680.66px;top:44.1px;width:0.6px;height:1.4px;background:#555555"></div>
<div class="a" style="left:682.7px;top:44.1px;width:0.6px;height:1.4px;background:#555555"></div>
<div class="a" style="left:684.73px;top:44.1px;width:0.6px;height:1.4px;background:#555555"></div>
<div class="a" style="left:686.76px;top:43.3px;width:0.6px;height:2.2px;background:#555555"></div>
<div class="a" style="left:688.79px;top:44.1px;width:0.6px;height:1.4px;background:#555555"></div>
<div class="a" style="left:690.83px;top:44.1px;width:0.6px;height:1.4px;background:#555555"></div>
<div class="a" style="left:692.86px;top:44.1px;width:0.6px;height:1.4px;background:#555555"></div>
<div class="a" style="left:694.89px;top:37.5px;width:0.7px;height:8px;background:#575757"></div>
<div class="t" style="left:696.29px;top:41px;font-size:4.66px;transform-origin:0 0;transform:scaleX(0.9);color:#b4b4b4;text-shadow:none">2900</div>
<div class="a" style="left:696.92px;top:44.1px;width:0.6px;height:1.4px;background:#555555"></div>
<div class="a" style="left:698.96px;top:44.1px;width:0.6px;height:1.4px;background:#555555"></div>
<div class="a" style="left:700.99px;top:44.1px;width:0.6px;height:1.4px;background:#555555"></div>
<div class="a" style="left:703.02px;top:43.3px;width:0.6px;height:2.2px;background:#555555"></div>
<div class="a" style="left:705.05px;top:44.1px;width:0.6px;height:1.4px;background:#555555"></div>
<div class="a" style="left:707.09px;top:44.1px;width:0.6px;height:1.4px;background:#555555"></div>
<div class="a" style="left:709.12px;top:44.1px;width:0.6px;height:1.4px;background:#555555"></div>
<div class="a" style="left:711.15px;top:37.5px;width:0.7px;height:8px;background:#575757"></div>
<div class="t" style="left:712.55px;top:41px;font-size:4.66px;transform-origin:0 0;transform:scaleX(0.9);color:#b4b4b4;text-shadow:none">3000</div>
<div class="a" style="left:713.18px;top:44.1px;width:0.6px;height:1.4px;background:#555555"></div>
<div class="a" style="left:715.22px;top:44.1px;width:0.6px;height:1.4px;background:#555555"></div>
<div class="a" style="left:717.25px;top:44.1px;width:0.6px;height:1.4px;background:#555555"></div>
<div class="a" style="left:719.28px;top:43.3px;width:0.6px;height:2.2px;background:#555555"></div>
<div class="a" style="left:721.31px;top:44.1px;width:0.6px;height:1.4px;background:#555555"></div>
<div class="a" style="left:723.35px;top:44.1px;width:0.6px;height:1.4px;background:#555555"></div>
<div class="a" style="left:725.38px;top:44.1px;width:0.6px;height:1.4px;background:#555555"></div>
<div class="a" style="left:727.41px;top:37.5px;width:0.7px;height:8px;background:#575757"></div>
<div class="t" style="left:728.81px;top:41px;font-size:4.66px;transform-origin:0 0;transform:scaleX(0.9);color:#b4b4b4;text-shadow:none">3100</div>
<div class="a" style="left:729.44px;top:44.1px;width:0.6px;height:1.4px;background:#555555"></div>
<div class="a" style="left:731.48px;top:44.1px;width:0.6px;height:1.4px;background:#555555"></div>
<div class="a" style="left:733.51px;top:44.1px;width:0.6px;height:1.4px;background:#555555"></div>
<div class="a" style="left:735.54px;top:43.3px;width:0.6px;height:2.2px;background:#555555"></div>
<div class="a" style="left:737.57px;top:44.1px;width:0.6px;height:1.4px;background:#555555"></div>
<div class="a" style="left:739.61px;top:44.1px;width:0.6px;height:1.4px;background:#555555"></div>
<div class="a" style="left:741.64px;top:44.1px;width:0.6px;height:1.4px;background:#555555"></div>
<div class="a" style="left:743.67px;top:37.5px;width:0.7px;height:8px;background:#575757"></div>
<div class="t" style="left:745.07px;top:41px;font-size:4.66px;transform-origin:0 0;transform:scaleX(0.9);color:#b4b4b4;text-shadow:none">3200</div>
<div class="a" style="left:745.7px;top:44.1px;width:0.6px;height:1.4px;background:#555555"></div>
<div class="a" style="left:747.74px;top:44.1px;width:0.6px;height:1.4px;background:#555555"></div>
<div class="a" style="left:749.77px;top:44.1px;width:0.6px;height:1.4px;background:#555555"></div>
<div class="a" style="left:751.8px;top:43.3px;width:0.6px;height:2.2px;background:#555555"></div>
<div class="a" style="left:753.83px;top:44.1px;width:0.6px;height:1.4px;background:#555555"></div>
<div class="a" style="left:755.87px;top:44.1px;width:0.6px;height:1.4px;background:#555555"></div>
<div class="a" style="left:757.9px;top:44.1px;width:0.6px;height:1.4px;background:#555555"></div>
<div class="a" style="left:759.93px;top:37.5px;width:0.7px;height:8px;background:#575757"></div>
<div class="t" style="left:761.33px;top:41px;font-size:4.66px;transform-origin:0 0;transform:scaleX(0.9);color:#b4b4b4;text-shadow:none">3300</div>
<div class="a" style="left:761.96px;top:44.1px;width:0.6px;height:1.4px;background:#555555"></div>
<div class="a" style="left:764.0px;top:44.1px;width:0.6px;height:1.4px;background:#555555"></div>
<div class="a" style="left:0px;top:55.32px;width:6px;height:0.6px;background:#4c4c4c"></div>
<div class="t" style="left:1px;top:56.3px;font-size:3.8px;line-height:3.4px;color:#9a9a9a;text-align:center;width:3.6px;text-shadow:none">3<br>0<br>0</div>
<div class="a" style="left:0px;top:71.58px;width:6px;height:0.6px;background:#4c4c4c"></div>
<div class="t" style="left:1px;top:72.6px;font-size:3.8px;line-height:3.4px;color:#9a9a9a;text-align:center;width:3.6px;text-shadow:none">2<br>0<br>0</div>
<div class="a" style="left:0px;top:87.84px;width:6px;height:0.6px;background:#4c4c4c"></div>
<div class="t" style="left:1px;top:88.8px;font-size:3.8px;line-height:3.4px;color:#9a9a9a;text-align:center;width:3.6px;text-shadow:none">1<br>0<br>0</div>
<div class="a" style="left:0px;top:104.1px;width:6px;height:0.6px;background:#4c4c4c"></div>
<div class="t" style="left:1px;top:105.1px;font-size:3.8px;line-height:3.4px;color:#9a9a9a;text-align:center;width:3.6px;text-shadow:none">0</div>
<div class="a" style="left:0px;top:120.36px;width:6px;height:0.6px;background:#4c4c4c"></div>
<div class="t" style="left:1px;top:121.4px;font-size:3.8px;line-height:3.4px;color:#9a9a9a;text-align:center;width:3.6px;text-shadow:none">1<br>0<br>0</div>
<div class="a" style="left:0px;top:136.62px;width:6px;height:0.6px;background:#4c4c4c"></div>
<div class="t" style="left:1px;top:137.6px;font-size:3.8px;line-height:3.4px;color:#9a9a9a;text-align:center;width:3.6px;text-shadow:none">2<br>0<br>0</div>
<div class="a" style="left:0px;top:152.88px;width:6px;height:0.6px;background:#4c4c4c"></div>
<div class="t" style="left:1px;top:153.9px;font-size:3.8px;line-height:3.4px;color:#9a9a9a;text-align:center;width:3.6px;text-shadow:none">3<br>0<br>0</div>
<div class="a" style="left:0px;top:169.14px;width:6px;height:0.6px;background:#4c4c4c"></div>
<div class="t" style="left:1px;top:170.1px;font-size:3.8px;line-height:3.4px;color:#9a9a9a;text-align:center;width:3.6px;text-shadow:none">4<br>0<br>0</div>
<div class="a" style="left:0px;top:185.4px;width:6px;height:0.6px;background:#4c4c4c"></div>
<div class="t" style="left:1px;top:186.4px;font-size:3.8px;line-height:3.4px;color:#9a9a9a;text-align:center;width:3.6px;text-shadow:none">5<br>0<br>0</div>
<div class="a" style="left:0px;top:201.66px;width:6px;height:0.6px;background:#4c4c4c"></div>
<div class="t" style="left:1px;top:202.7px;font-size:3.8px;line-height:3.4px;color:#9a9a9a;text-align:center;width:3.6px;text-shadow:none">6<br>0<br>0</div>
<div class="a" style="left:0px;top:217.92px;width:6px;height:0.6px;background:#4c4c4c"></div>
<div class="t" style="left:1px;top:218.9px;font-size:3.8px;line-height:3.4px;color:#9a9a9a;text-align:center;width:3.6px;text-shadow:none">7<br>0<br>0</div>
<div class="a" style="left:0px;top:234.18px;width:6px;height:0.6px;background:#4c4c4c"></div>
<div class="t" style="left:1px;top:235.2px;font-size:3.8px;line-height:3.4px;color:#9a9a9a;text-align:center;width:3.6px;text-shadow:none">8<br>0<br>0</div>
<div class="a" style="left:0px;top:250.44px;width:6px;height:0.6px;background:#4c4c4c"></div>
<div class="t" style="left:1px;top:251.4px;font-size:3.8px;line-height:3.4px;color:#9a9a9a;text-align:center;width:3.6px;text-shadow:none">9<br>0<br>0</div>
<div class="a" style="left:0px;top:266.7px;width:6px;height:0.6px;background:#4c4c4c"></div>
<div class="t" style="left:1px;top:267.7px;font-size:3.8px;line-height:3.4px;color:#9a9a9a;text-align:center;width:3.6px;text-shadow:none">1<br>0<br>0<br>0</div>
<div class="a" style="left:0px;top:282.96px;width:6px;height:0.6px;background:#4c4c4c"></div>
<div class="t" style="left:1px;top:284.0px;font-size:3.8px;line-height:3.4px;color:#9a9a9a;text-align:center;width:3.6px;text-shadow:none">1<br>1<br>0<br>0</div>
<div class="a" style="left:0px;top:299.22px;width:6px;height:0.6px;background:#4c4c4c"></div>
<div class="t" style="left:1px;top:300.2px;font-size:3.8px;line-height:3.4px;color:#9a9a9a;text-align:center;width:3.6px;text-shadow:none">1<br>2<br>0<br>0</div>
<div class="a" style="left:0px;top:315.48px;width:6px;height:0.6px;background:#4c4c4c"></div>
<div class="t" style="left:1px;top:316.5px;font-size:3.8px;line-height:3.4px;color:#9a9a9a;text-align:center;width:3.6px;text-shadow:none">1<br>3<br>0<br>0</div>
<div class="a" style="left:0px;top:331.74px;width:6px;height:0.6px;background:#4c4c4c"></div>
<div class="t" style="left:1px;top:332.7px;font-size:3.8px;line-height:3.4px;color:#9a9a9a;text-align:center;width:3.6px;text-shadow:none">1<br>4<br>0<br>0</div>
<div class="a" style="left:0px;top:348.0px;width:6px;height:0.6px;background:#4c4c4c"></div>
<div class="t" style="left:1px;top:349.0px;font-size:3.8px;line-height:3.4px;color:#9a9a9a;text-align:center;width:3.6px;text-shadow:none">1<br>5<br>0<br>0</div>
<div class="a" style="left:0px;top:364.26px;width:6px;height:0.6px;background:#4c4c4c"></div>
<div class="t" style="left:1px;top:365.3px;font-size:3.8px;line-height:3.4px;color:#9a9a9a;text-align:center;width:3.6px;text-shadow:none">1<br>6<br>0<br>0</div>
<div class="a" style="left:0px;top:380.52px;width:6px;height:0.6px;background:#4c4c4c"></div>
<div class="t" style="left:1px;top:381.5px;font-size:3.8px;line-height:3.4px;color:#9a9a9a;text-align:center;width:3.6px;text-shadow:none">1<br>7<br>0<br>0</div>
<div class="a" style="left:0px;top:396.78px;width:6px;height:0.6px;background:#4c4c4c"></div>
<div class="t" style="left:1px;top:397.8px;font-size:3.8px;line-height:3.4px;color:#9a9a9a;text-align:center;width:3.6px;text-shadow:none">1<br>8<br>0<br>0</div>
<div class="a" style="left:0px;top:413.04px;width:6px;height:0.6px;background:#4c4c4c"></div>
<div class="t" style="left:1px;top:414.0px;font-size:3.8px;line-height:3.4px;color:#9a9a9a;text-align:center;width:3.6px;text-shadow:none">1<br>9<br>0<br>0</div>
<div class="a" style="left:0px;top:429.3px;width:6px;height:0.6px;background:#4c4c4c"></div>
<div class="t" style="left:1px;top:430.3px;font-size:3.8px;line-height:3.4px;color:#9a9a9a;text-align:center;width:3.6px;text-shadow:none">2<br>0<br>0<br>0</div>
<div class="a" style="left:0px;top:445.56px;width:6px;height:0.6px;background:#4c4c4c"></div>
<div class="t" style="left:1px;top:446.6px;font-size:3.8px;line-height:3.4px;color:#9a9a9a;text-align:center;width:3.6px;text-shadow:none">2<br>1<br>0<br>0</div>
<div class="a" style="left:364.6px;top:38.2px;width:0.9px;height:4.8px;background:#bdbdbd"></div>
<div class="a" style="left:223.3px;top:104.1px;width:326px;height:325.8px;background:#ffffff"></div>
<div class="a" style="left:51.9px;top:160.6px;width:187.9px;height:187.3px;background:#2a2a2a;border-radius:2px"></div>
<div class="a" style="left:52.9px;top:161.6px;width:185.9px;height:185.3px;background:#545454"></div>
<div class="a" style="left:52.9px;top:161.6px;width:185.9px;height:6.9px;background:#474747"></div>
<div class="a" style="left:52.9px;top:168.5px;width:185.9px;height:13.2px;background:#424242"></div>
<div class="a" style="left:52.9px;top:168.5px;width:38.3px;height:13.2px;background:#4e4e4e"></div>
<div class="t" style="left:57.7px;top:174px;font-size:4.94px;transform-origin:0 0;transform:scaleX(0.923);color:#f2f2f2;font-weight:bold">BBTools Tiler</div>
<svg class="a" style="left:223.5px;top:163.2px;" width="6" height="4" viewBox="0 0 6 4"><path d="M2.8 0.3 L0.3 2 L2.8 3.7Z M5.5 0.3 L3 2 L5.5 3.7Z" fill="#b8b8b8"/></svg>
<svg class="a" style="left:232.3px;top:163px;" width="5" height="5" viewBox="0 0 5 5"><path d="M0.7 0.7 L4.3 4.3 M4.3 0.7 L0.7 4.3" stroke="#c4c4c4" stroke-width="0.8"/></svg>
<div class="a" style="left:231.6px;top:173.4px;width:4.2px;height:0.8px;background:#a8a8a8"></div>
<div class="a" style="left:231.6px;top:174.85px;width:4.2px;height:0.8px;background:#a8a8a8"></div>
<div class="a" style="left:231.6px;top:176.3px;width:4.2px;height:0.8px;background:#a8a8a8"></div>
<div class="t" style="left:73.8px;top:191px;font-size:5.49px;transform-origin:0 0;transform:scaleX(0.957);color:#d4d4d4">Make Tiles</div>
<div class="t" style="left:126.9px;top:191px;font-size:5.49px;transform-origin:0 0;transform:scaleX(0.961);color:#d4d4d4">Make Seamless</div>
<div class="t" style="left:191.2px;top:191px;font-size:5.49px;transform-origin:0 0;transform:scaleX(0.915);color:#fbfbfb;font-weight:bold">Tile Texture</div>
<div class="a" style="left:57.2px;top:198.7px;width:177.6px;height:1px;background:#6a6a6a"></div>
<div class="a" style="left:175.5px;top:198.2px;width:59.3px;height:2px;background:#e6e6e6"></div>
<div class="t" style="left:87.4px;top:208px;font-size:5.76px;transform-origin:0 0;transform:scaleX(0.965);color:#d4d4d4">Tiling Method</div>
<div class="a" style="left:88.1px;top:216.5px;width:115.5px;height:13.9px;background:#333333;border-radius:1px"></div>
<div class="t" style="left:94.2px;top:221px;font-size:6.31px;transform-origin:0 0;transform:scaleX(0.872);color:#f4f4f4;font-weight:bold">Tiler</div>
<svg class="a" style="left:192.6px;top:221.7px;" width="5.6" height="3.8" viewBox="0 0 5.6 3.8"><path d="M0.6 0.6 L2.8 2.8 L5.0 0.6" stroke="#f0f0f0" stroke-width="1.1" fill="none"/></svg>
<div class="t" style="left:59.3px;top:240px;font-size:5.49px;transform-origin:0 0;transform:scaleX(0.927);color:#d0d0d0">Texture Scale</div>
<div class="a" style="left:59.3px;top:254.7px;width:1.3px;height:1.3px;background:#d8d8d8"></div>
<div class="a" style="left:63.3px;top:251.3px;width:8px;height:8px;border:1.1px solid #d4d4d4;border-radius:50%;background:#4a4a4a"></div>
<div class="a" style="left:182.8px;top:247.9px;width:37.6px;height:14.1px;background:#333333"></div>
<div class="t" style="left:189.7px;top:253px;font-size:5.9px;transform-origin:0 0;transform:scaleX(1.036);color:#d0d0d0">20</div>
<div class="t" style="left:225.3px;top:255px;font-size:4.6px;color:#d0d0d0">%</div>
<div class="a" style="left:119.2px;top:267.2px;width:7.3px;height:7.3px;border:1px solid #b8b8b8;background:#2e2e2e;border-radius:1.5px"></div>
<div class="t" style="left:131.4px;top:268px;font-size:6.58px;transform-origin:0 0;transform:scaleX(0.933);color:#ececec">Rotate Texture</div>
<div class="a" style="left:114.7px;top:282.9px;width:7.3px;height:7.3px;border:1px solid #b8b8b8;background:#2e2e2e;border-radius:1.5px"></div>
<div class="t" style="left:126.7px;top:284px;font-size:6.58px;transform-origin:0 0;transform:scaleX(0.927);color:#ececec">Reduce Repetition</div>
<div class="a" style="left:122.2px;top:298px;width:7.3px;height:7.3px;border:1px solid #b8b8b8;background:#2e2e2e;border-radius:1.5px"></div>
<div class="t" style="left:134px;top:299px;font-size:6.58px;transform-origin:0 0;transform:scaleX(0.979);color:#ececec">Auto-update</div>
<div class="a" style="left:120.8px;top:317.2px;width:50.2px;height:16.7px;background:#1473e6;border-radius:8.4px"></div>
<div class="t" style="left:129.1px;top:322px;font-size:6.86px;transform-origin:0 0;transform:scaleX(0.887);color:#fff;font-weight:bold">Tile Texture</div>
<div class="a" style="left:52.9px;top:343px;width:185.9px;height:0.8px;background:#424242"></div>
<div class="a" style="left:52.9px;top:343.7px;width:185.9px;height:3.2px;background:#5a5a5a"></div>
<div class="a" style="left:279px;top:133.3px;width:341px;height:260.9px;background:#2a2a2a;border-radius:2px"></div>
<div class="a" style="left:280px;top:134.3px;width:339px;height:258.9px;background:#525252"></div>
<div class="a" style="left:280px;top:134.3px;width:339px;height:7.2px;background:#434343"></div>
<div class="a" style="left:280px;top:141.5px;width:339px;height:12.7px;background:#3f3f3f"></div>
<div class="a" style="left:280px;top:141.5px;width:43.1px;height:12.7px;background:#4b4b4b"></div>
<div class="t" style="left:285.2px;top:146px;font-size:5.21px;transform-origin:0 0;transform:scaleX(0.923);color:#f2f2f2;font-weight:bold">Texture Library</div>
<svg class="a" style="left:603.2px;top:136px;" width="6" height="4" viewBox="0 0 6 4"><path d="M2.8 0.3 L0.3 2 L2.8 3.7Z M5.5 0.3 L3 2 L5.5 3.7Z" fill="#b8b8b8"/></svg>
<svg class="a" style="left:612.3px;top:135.6px;" width="5" height="5" viewBox="0 0 5 5"><path d="M0.7 0.7 L4.3 4.3 M4.3 0.7 L0.7 4.3" stroke="#c4c4c4" stroke-width="0.8"/></svg>
<div class="a" style="left:611.5px;top:146.2px;width:4.2px;height:0.8px;background:#a8a8a8"></div>
<div class="a" style="left:611.5px;top:147.65px;width:4.2px;height:0.8px;background:#a8a8a8"></div>
<div class="a" style="left:611.5px;top:149.1px;width:4.2px;height:0.8px;background:#a8a8a8"></div>
<div class="t" style="left:284.5px;top:164px;font-size:5.62px;transform-origin:0 0;transform:scaleX(0.922);color:#cccccc">Source</div>
<div class="a" style="left:285.2px;top:172.1px;width:115.8px;height:13.9px;background:#313131;border-radius:1px"></div>
<div class="t" style="left:290.8px;top:177px;font-size:6.17px;transform-origin:0 0;transform:scaleX(0.968);color:#f2f2f2">Pexels</div>
<svg class="a" style="left:390.5px;top:177.8px;" width="5.6" height="3.8" viewBox="0 0 5.6 3.8"><path d="M0.6 0.6 L2.8 2.8 L5.0 0.6" stroke="#f0f0f0" stroke-width="1.1" fill="none"/></svg>
<div class="t" style="left:405.3px;top:164px;font-size:5.49px;transform-origin:0 0;transform:scaleX(0.97);color:#cccccc">Category</div>
<div class="a" style="left:406px;top:172px;width:115.6px;height:14.2px;background:#313131;border-radius:1px"></div>
<div class="t" style="left:411.7px;top:177px;font-size:6.31px;transform-origin:0 0;transform:scaleX(0.969);color:#f2f2f2;font-weight:bold">All</div>
<svg class="a" style="left:511.6px;top:178px;" width="5.6" height="3.8" viewBox="0 0 5.6 3.8"><path d="M0.6 0.6 L2.8 2.8 L5.0 0.6" stroke="#f0f0f0" stroke-width="1.1" fill="none"/></svg>
<div class="a" style="left:526.3px;top:175.4px;width:7.6px;height:7.6px;background:#ececec;border-radius:1.2px"></div>
<svg class="a" style="left:526.3px;top:175.4px;" width="8" height="8" viewBox="0 0 8 8"><path d="M1.6 3.8 L3.2 5.5 L6.1 2.1" stroke="#2e2e2e" stroke-width="1.2" fill="none"/></svg>
<div class="t" style="left:538px;top:177px;font-size:6.31px;transform-origin:0 0;transform:scaleX(0.958);color:#ececec">Seamless</div>
<div class="a" style="left:286.5px;top:196.8px;width:320px;height:192.4px;background:#4b4b4b"></div>
<div class="a" style="left:606.5px;top:196.8px;width:8.5px;height:192.4px;background:#4f4f4f"></div>
<div class="a" style="left:608.5px;top:201.8px;width:5px;height:35px;background:#6a6a6a;border-radius:2.5px"></div>
<svg class="a" style="left:608.8px;top:197.3px;" width="5" height="3" viewBox="0 0 5 3"><path d="M0.6 2.4 L2.5 0.6 L4.4 2.4" stroke="#8a8a8a" stroke-width="0.8" fill="none"/></svg>
<svg class="a" style="left:608.8px;top:378.5px;" width="5" height="3" viewBox="0 0 5 3"><path d="M0.6 0.6 L2.5 2.4 L4.4 0.6" stroke="#999" stroke-width="0.8" fill="none"/></svg>
<div class="a" style="left:280px;top:389.2px;width:339px;height:0.8px;background:#3e3e3e"></div>
<div class="a" style="left:280px;top:389.8px;width:339px;height:3.4px;background:#565656"></div>
<div class="a" style="left:288.1px;top:198.6px;width:98.4px;height:98px;background:repeating-linear-gradient(180deg,#ad6a7e -2.6px,#b77c8e -0.1px,#bd8798 3.4px,#c598a9 6.9px,#d6b6c4 9.8px,#5e3244 10.8px,#7a4a5a 11.6px,#ad6a7e 12.3px)"></div>
<div class="a" style="left:326.98px;top:251.22px;width:22.64px;height:2.66px;background:radial-gradient(ellipse at center,rgba(225,205,225,0.25) 0%,rgba(225,205,225,0) 72%)"></div>
<div class="a" style="left:340.08px;top:215.96px;width:15.21px;height:3.07px;background:radial-gradient(ellipse at center,rgba(225,205,225,0.33) 0%,rgba(225,205,225,0) 72%)"></div>
<div class="a" style="left:292.23px;top:227.12px;width:7.63px;height:3.52px;background:radial-gradient(ellipse at center,rgba(225,205,225,0.30) 0%,rgba(225,205,225,0) 72%)"></div>
<div class="a" style="left:288.1px;top:290.93px;width:22.43px;height:3.13px;background:radial-gradient(ellipse at center,rgba(225,205,225,0.28) 0%,rgba(225,205,225,0) 72%)"></div>
<div class="a" style="left:298.38px;top:200.01px;width:15.51px;height:1.65px;background:radial-gradient(ellipse at center,rgba(225,205,225,0.17) 0%,rgba(225,205,225,0) 72%)"></div>
<div class="a" style="left:306.57px;top:201.43px;width:14.35px;height:2.6px;background:radial-gradient(ellipse at center,rgba(225,205,225,0.34) 0%,rgba(225,205,225,0) 72%)"></div>
<div class="a" style="left:333.46px;top:258.79px;width:15.0px;height:3.16px;background:radial-gradient(ellipse at center,rgba(225,205,225,0.24) 0%,rgba(225,205,225,0) 72%)"></div>
<div class="a" style="left:310.08px;top:292.38px;width:23.92px;height:3.6px;background:radial-gradient(ellipse at center,rgba(225,205,225,0.30) 0%,rgba(225,205,225,0) 72%)"></div>
<div class="a" style="left:313.68px;top:220.19px;width:11.2px;height:1.68px;background:radial-gradient(ellipse at center,rgba(225,205,225,0.32) 0%,rgba(225,205,225,0) 72%)"></div>
<div class="a" style="left:321.94px;top:278.18px;width:12.96px;height:3.9px;background:radial-gradient(ellipse at center,rgba(225,205,225,0.34) 0%,rgba(225,205,225,0) 72%)"></div>
<div class="a" style="left:288.1px;top:218.31px;width:17.44px;height:2.67px;background:radial-gradient(ellipse at center,rgba(225,205,225,0.37) 0%,rgba(225,205,225,0) 72%)"></div>
<div class="a" style="left:321.65px;top:205.47px;width:17.33px;height:3.45px;background:radial-gradient(ellipse at center,rgba(225,205,225,0.19) 0%,rgba(225,205,225,0) 72%)"></div>
<div class="a" style="left:291.55px;top:229.86px;width:23.35px;height:3.4px;background:radial-gradient(ellipse at center,rgba(225,205,225,0.15) 0%,rgba(225,205,225,0) 72%)"></div>
<div class="a" style="left:307.0px;top:208.1px;width:7.08px;height:3.49px;background:radial-gradient(ellipse at center,rgba(225,205,225,0.17) 0%,rgba(225,205,225,0) 72%)"></div>
<div class="a" style="left:337.35px;top:240.66px;width:9.43px;height:3.33px;background:radial-gradient(ellipse at center,rgba(225,205,225,0.15) 0%,rgba(225,205,225,0) 72%)"></div>
<div class="a" style="left:345.54px;top:209.55px;width:13.57px;height:2.03px;background:radial-gradient(ellipse at center,rgba(225,205,225,0.19) 0%,rgba(225,205,225,0) 72%)"></div>
<div class="a" style="left:377.28px;top:274.12px;width:9.22px;height:3.71px;background:radial-gradient(ellipse at center,rgba(225,205,225,0.17) 0%,rgba(225,205,225,0) 72%)"></div>
<div class="a" style="left:321.34px;top:278.91px;width:17.55px;height:1.75px;background:radial-gradient(ellipse at center,rgba(225,205,225,0.38) 0%,rgba(225,205,225,0) 72%)"></div>
<div class="a" style="left:303.78px;top:222.88px;width:19.91px;height:2.32px;background:radial-gradient(ellipse at center,rgba(225,205,225,0.20) 0%,rgba(225,205,225,0) 72%)"></div>
<div class="a" style="left:290.22px;top:207.07px;width:16.49px;height:2.11px;background:radial-gradient(ellipse at center,rgba(225,205,225,0.28) 0%,rgba(225,205,225,0) 72%)"></div>
<div class="a" style="left:319.16px;top:241.2px;width:23.26px;height:2.71px;background:radial-gradient(ellipse at center,rgba(225,205,225,0.27) 0%,rgba(225,205,225,0) 72%)"></div>
<div class="a" style="left:367.15px;top:215.79px;width:8.77px;height:3.77px;background:radial-gradient(ellipse at center,rgba(225,205,225,0.33) 0%,rgba(225,205,225,0) 72%)"></div>
<div class="a" style="left:307.3px;top:216.44px;width:19.31px;height:3.85px;background:radial-gradient(ellipse at center,rgba(225,205,225,0.17) 0%,rgba(225,205,225,0) 72%)"></div>
<div class="a" style="left:375.26px;top:281.53px;width:11.24px;height:2.55px;background:radial-gradient(ellipse at center,rgba(225,205,225,0.15) 0%,rgba(225,205,225,0) 72%)"></div>
<div class="a" style="left:288.1px;top:289.09px;width:9.04px;height:3.26px;background:radial-gradient(ellipse at center,rgba(225,205,225,0.19) 0%,rgba(225,205,225,0) 72%)"></div>
<div class="a" style="left:363.0px;top:254.67px;width:11.28px;height:1.94px;background:radial-gradient(ellipse at center,rgba(225,205,225,0.31) 0%,rgba(225,205,225,0) 72%)"></div>
<div class="a" style="left:289.77px;top:220.07px;width:16.07px;height:3.63px;background:radial-gradient(ellipse at center,rgba(225,205,225,0.28) 0%,rgba(225,205,225,0) 72%)"></div>
<div class="a" style="left:310.28px;top:284.83px;width:9.67px;height:1.54px;background:radial-gradient(ellipse at center,rgba(225,205,225,0.19) 0%,rgba(225,205,225,0) 72%)"></div>
<div class="a" style="left:326.33px;top:204.28px;width:9.17px;height:2.42px;background:radial-gradient(ellipse at center,rgba(225,205,225,0.27) 0%,rgba(225,205,225,0) 72%)"></div>
<div class="a" style="left:295.86px;top:232.64px;width:22.04px;height:3.95px;background:radial-gradient(ellipse at center,rgba(225,205,225,0.29) 0%,rgba(225,205,225,0) 72%)"></div>
<div class="a" style="left:350.15px;top:253.54px;width:8.53px;height:1.59px;background:radial-gradient(ellipse at center,rgba(225,205,225,0.12) 0%,rgba(225,205,225,0) 72%)"></div>
<div class="a" style="left:371.39px;top:264.49px;width:15.11px;height:1.55px;background:radial-gradient(ellipse at center,rgba(225,205,225,0.29) 0%,rgba(225,205,225,0) 72%)"></div>
<div class="a" style="left:329.88px;top:267.27px;width:11.74px;height:4.0px;background:radial-gradient(ellipse at center,rgba(225,205,225,0.14) 0%,rgba(225,205,225,0) 72%)"></div>
<div class="a" style="left:336.07px;top:267.88px;width:22.2px;height:3.34px;background:radial-gradient(ellipse at center,rgba(225,205,225,0.30) 0%,rgba(225,205,225,0) 72%)"></div>
<div class="a" style="left:360.05px;top:284.61px;width:12.33px;height:3.21px;background:radial-gradient(ellipse at center,rgba(225,205,225,0.35) 0%,rgba(225,205,225,0) 72%)"></div>
<div class="a" style="left:367.6px;top:237.81px;width:18.9px;height:3.66px;background:radial-gradient(ellipse at center,rgba(225,205,225,0.27) 0%,rgba(225,205,225,0) 72%)"></div>
<div class="a" style="left:343.72px;top:234.54px;width:16.49px;height:3.02px;background:radial-gradient(ellipse at center,rgba(225,205,225,0.14) 0%,rgba(225,205,225,0) 72%)"></div>
<div class="a" style="left:345.12px;top:291.97px;width:21.84px;height:3.32px;background:radial-gradient(ellipse at center,rgba(225,205,225,0.22) 0%,rgba(225,205,225,0) 72%)"></div>
<div class="a" style="left:354.4px;top:253.21px;width:13.93px;height:3.6px;background:radial-gradient(ellipse at center,rgba(225,205,225,0.14) 0%,rgba(225,205,225,0) 72%)"></div>
<div class="a" style="left:355.87px;top:201.4px;width:16.82px;height:2.7px;background:radial-gradient(ellipse at center,rgba(225,205,225,0.18) 0%,rgba(225,205,225,0) 72%)"></div>
<div class="a" style="left:350.84px;top:245.34px;width:17.06px;height:3.8px;background:radial-gradient(ellipse at center,rgba(225,205,225,0.19) 0%,rgba(225,205,225,0) 72%)"></div>
<div class="a" style="left:288.1px;top:226.9px;width:14.3px;height:2.01px;background:radial-gradient(ellipse at center,rgba(225,205,225,0.16) 0%,rgba(225,205,225,0) 72%)"></div>
<div class="a" style="left:370.95px;top:260.64px;width:13.95px;height:3.73px;background:radial-gradient(ellipse at center,rgba(225,205,225,0.21) 0%,rgba(225,205,225,0) 72%)"></div>
<div class="a" style="left:347.69px;top:217.26px;width:13.76px;height:3.51px;background:radial-gradient(ellipse at center,rgba(225,205,225,0.36) 0%,rgba(225,205,225,0) 72%)"></div>
<div class="a" style="left:368.49px;top:234.74px;width:16.5px;height:2.29px;background:radial-gradient(ellipse at center,rgba(225,205,225,0.16) 0%,rgba(225,205,225,0) 72%)"></div>
<div class="a" style="left:290px;top:214px;width:10px;height:5px;background:radial-gradient(ellipse at center,rgba(245,235,240,0.75) 0%,rgba(245,235,240,0) 70%)"></div>
<div class="a" style="left:300px;top:211px;width:8px;height:7px;background:radial-gradient(ellipse at center,rgba(245,235,240,0.6) 0%,rgba(245,235,240,0) 70%)"></div>
<div class="a" style="left:312px;top:214px;width:14px;height:4px;background:radial-gradient(ellipse at center,rgba(245,235,240,0.45) 0%,rgba(245,235,240,0) 70%)"></div>
<div class="a" style="left:393.8px;top:198.6px;width:97.9px;height:98px;background:repeating-linear-gradient(180deg,#807079 0.3px,#968790 1.5px,#85757e 3.1px,#9d9098 4.5px,#6f6069 5.9px,#584850 6.9px,#807079 7.6px);overflow:hidden"></div>
<div class="a" style="left:419.56px;top:212.78px;width:24.32px;height:1.62px;background:radial-gradient(ellipse at center,rgba(215,205,215,0.28) 0%,rgba(215,205,215,0) 72%)"></div>
<div class="a" style="left:423.54px;top:204.05px;width:21.16px;height:1.56px;background:radial-gradient(ellipse at center,rgba(215,205,215,0.26) 0%,rgba(215,205,215,0) 72%)"></div>
<div class="a" style="left:395.44px;top:207.13px;width:19.34px;height:2.91px;background:radial-gradient(ellipse at center,rgba(215,205,215,0.18) 0%,rgba(215,205,215,0) 72%)"></div>
<div class="a" style="left:410.01px;top:257.58px;width:30.85px;height:2.48px;background:radial-gradient(ellipse at center,rgba(215,205,215,0.25) 0%,rgba(215,205,215,0) 72%)"></div>
<div class="a" style="left:481.54px;top:202.98px;width:10.16px;height:1.99px;background:radial-gradient(ellipse at center,rgba(215,205,215,0.19) 0%,rgba(215,205,215,0) 72%)"></div>
<div class="a" style="left:399.99px;top:227.6px;width:27.95px;height:1.81px;background:radial-gradient(ellipse at center,rgba(215,205,215,0.30) 0%,rgba(215,205,215,0) 72%)"></div>
<div class="a" style="left:449.5px;top:233.61px;width:22.05px;height:1.61px;background:radial-gradient(ellipse at center,rgba(215,205,215,0.16) 0%,rgba(215,205,215,0) 72%)"></div>
<div class="a" style="left:408.37px;top:262.56px;width:19.41px;height:2.03px;background:radial-gradient(ellipse at center,rgba(215,205,215,0.30) 0%,rgba(215,205,215,0) 72%)"></div>
<div class="a" style="left:431.85px;top:226.78px;width:27.48px;height:2.69px;background:radial-gradient(ellipse at center,rgba(215,205,215,0.21) 0%,rgba(215,205,215,0) 72%)"></div>
<div class="a" style="left:443.37px;top:247.97px;width:29.25px;height:2.74px;background:radial-gradient(ellipse at center,rgba(215,205,215,0.22) 0%,rgba(215,205,215,0) 72%)"></div>
<div class="a" style="left:481.92px;top:209.7px;width:9.78px;height:2.79px;background:radial-gradient(ellipse at center,rgba(215,205,215,0.19) 0%,rgba(215,205,215,0) 72%)"></div>
<div class="a" style="left:435.25px;top:202.29px;width:24.7px;height:2.8px;background:radial-gradient(ellipse at center,rgba(215,205,215,0.29) 0%,rgba(215,205,215,0) 72%)"></div>
<div class="a" style="left:471.97px;top:228.09px;width:19.73px;height:2.51px;background:radial-gradient(ellipse at center,rgba(215,205,215,0.29) 0%,rgba(215,205,215,0) 72%)"></div>
<div class="a" style="left:432.14px;top:277.56px;width:30.78px;height:2.31px;background:radial-gradient(ellipse at center,rgba(215,205,215,0.32) 0%,rgba(215,205,215,0) 72%)"></div>
<div class="a" style="left:394.56px;top:264.54px;width:24.24px;height:3.19px;background:radial-gradient(ellipse at center,rgba(215,205,215,0.36) 0%,rgba(215,205,215,0) 72%)"></div>
<div class="a" style="left:415.84px;top:234.86px;width:24.71px;height:1.54px;background:radial-gradient(ellipse at center,rgba(215,205,215,0.27) 0%,rgba(215,205,215,0) 72%)"></div>
<div class="a" style="left:404.76px;top:209.61px;width:11.3px;height:2.81px;background:radial-gradient(ellipse at center,rgba(215,205,215,0.18) 0%,rgba(215,205,215,0) 72%)"></div>
<div class="a" style="left:412.32px;top:235.35px;width:29.17px;height:1.64px;background:radial-gradient(ellipse at center,rgba(215,205,215,0.26) 0%,rgba(215,205,215,0) 72%)"></div>
<div class="a" style="left:441.0px;top:281.64px;width:28.02px;height:2.97px;background:radial-gradient(ellipse at center,rgba(215,205,215,0.22) 0%,rgba(215,205,215,0) 72%)"></div>
<div class="a" style="left:428.25px;top:232.32px;width:29.45px;height:3.13px;background:radial-gradient(ellipse at center,rgba(215,205,215,0.19) 0%,rgba(215,205,215,0) 72%)"></div>
<div class="a" style="left:405.54px;top:220.4px;width:15.13px;height:2.32px;background:radial-gradient(ellipse at center,rgba(215,205,215,0.30) 0%,rgba(215,205,215,0) 72%)"></div>
<div class="a" style="left:413.76px;top:198.98px;width:19.22px;height:2.13px;background:radial-gradient(ellipse at center,rgba(215,205,215,0.29) 0%,rgba(215,205,215,0) 72%)"></div>
<div class="a" style="left:479.34px;top:263.51px;width:12.36px;height:2.55px;background:radial-gradient(ellipse at center,rgba(215,205,215,0.32) 0%,rgba(215,205,215,0) 72%)"></div>
<div class="a" style="left:393.93px;top:283.16px;width:27.16px;height:2.99px;background:radial-gradient(ellipse at center,rgba(215,205,215,0.35) 0%,rgba(215,205,215,0) 72%)"></div>
<div class="a" style="left:426.08px;top:236.1px;width:12.28px;height:2.58px;background:radial-gradient(ellipse at center,rgba(215,205,215,0.17) 0%,rgba(215,205,215,0) 72%)"></div>
<div class="a" style="left:395.2px;top:218.22px;width:13.57px;height:2.08px;background:radial-gradient(ellipse at center,rgba(215,205,215,0.16) 0%,rgba(215,205,215,0) 72%)"></div>
<div class="a" style="left:393.8px;top:212.82px;width:7.25px;height:2.12px;background:radial-gradient(ellipse at center,rgba(215,205,215,0.16) 0%,rgba(215,205,215,0) 72%)"></div>
<div class="a" style="left:471.86px;top:256.32px;width:13.27px;height:1.93px;background:radial-gradient(ellipse at center,rgba(215,205,215,0.24) 0%,rgba(215,205,215,0) 72%)"></div>
<div class="a" style="left:423.4px;top:210.15px;width:28.68px;height:3.19px;background:radial-gradient(ellipse at center,rgba(215,205,215,0.27) 0%,rgba(215,205,215,0) 72%)"></div>
<div class="a" style="left:434.76px;top:206.67px;width:12.25px;height:2.08px;background:radial-gradient(ellipse at center,rgba(215,205,215,0.22) 0%,rgba(215,205,215,0) 72%)"></div>
<div class="a" style="left:467.54px;top:213.78px;width:10.51px;height:3.12px;background:radial-gradient(ellipse at center,rgba(215,205,215,0.28) 0%,rgba(215,205,215,0) 72%)"></div>
<div class="a" style="left:402.73px;top:249.66px;width:10.59px;height:2.4px;background:radial-gradient(ellipse at center,rgba(215,205,215,0.39) 0%,rgba(215,205,215,0) 72%)"></div>
<div class="a" style="left:470.82px;top:264.04px;width:15.74px;height:2.12px;background:radial-gradient(ellipse at center,rgba(215,205,215,0.19) 0%,rgba(215,205,215,0) 72%)"></div>
<div class="a" style="left:462.13px;top:248.66px;width:27.14px;height:2.06px;background:radial-gradient(ellipse at center,rgba(215,205,215,0.21) 0%,rgba(215,205,215,0) 72%)"></div>
<div class="a" style="left:465.89px;top:291.18px;width:25.81px;height:2.87px;background:radial-gradient(ellipse at center,rgba(215,205,215,0.35) 0%,rgba(215,205,215,0) 72%)"></div>
<div class="a" style="left:459.09px;top:219.91px;width:21.39px;height:2.1px;background:radial-gradient(ellipse at center,rgba(215,205,215,0.16) 0%,rgba(215,205,215,0) 72%)"></div>
<div class="a" style="left:393.8px;top:224.87px;width:13.36px;height:2.68px;background:radial-gradient(ellipse at center,rgba(215,205,215,0.39) 0%,rgba(215,205,215,0) 72%)"></div>
<div class="a" style="left:431.29px;top:286.68px;width:31.74px;height:3.12px;background:radial-gradient(ellipse at center,rgba(215,205,215,0.24) 0%,rgba(215,205,215,0) 72%)"></div>
<div class="a" style="left:409.74px;top:219.92px;width:14.33px;height:1.85px;background:radial-gradient(ellipse at center,rgba(215,205,215,0.31) 0%,rgba(215,205,215,0) 72%)"></div>
<div class="a" style="left:474.33px;top:277.6px;width:17.37px;height:2.61px;background:radial-gradient(ellipse at center,rgba(215,205,215,0.35) 0%,rgba(215,205,215,0) 72%)"></div>
<div class="a" style="left:499.1px;top:198.5px;width:97.6px;height:97px;background:repeating-linear-gradient(180deg,#98b8e2 -4.8px,#9ebde6 -2.8px,#95b5e0 6.8px,#a4c2ea 7.3px,#5f7fab 7.9px,#8aaad6 8.5px,#98b8e2 8.85px)"></div>
<div class="a" style="left:288.1px;top:303.5px;width:98.4px;height:82px;background:repeating-linear-gradient(90deg,#93abcf -1.6px,#9db4d6 0.4px,#8fa7cb 4.4px,#5d7297 5.5px,#52678c 6.2px,#93abcf 6.9px)"></div>
<div class="a" style="left:393.8px;top:303.5px;width:97.9px;height:82px;background:repeating-linear-gradient(180deg,#e2652f -6.5px,#e0632e 3.5px,#db5c28 5.1px,#bb4516 5.9px,#c84e1c 6.5px,#e8703a 6.9px,#e2652f 7.2px)"></div>
<div class="a" style="left:499.1px;top:303.5px;width:97.6px;height:82px;background:repeating-linear-gradient(90deg,#dcc9a8 -5.7px,#d8c5a3 3.3px,#c8b493 4.9px,#8f7c62 5.7px,#e8dcc4 6.4px,#dcc9a8 6.75px)"></div>
<div class="a" style="left:766px;top:37px;width:133px;height:422px;background:#434343"></div>
<div class="a" style="left:776px;top:23.2px;width:123px;height:6.5px;background:#434343"></div>
<svg class="a" style="left:787px;top:24.5px;" width="5" height="3.5" viewBox="0 0 5 3.5"><path d="M2.3 0.2 L0.2 1.75 L2.3 3.3Z M4.8 0.2 L2.7 1.75 L4.8 3.3Z" fill="#c4c4c4"/></svg>
<div class="a" style="left:775.5px;top:29.7px;width:19.2px;height:430px;background:#3b3b3b"></div>
<div class="a" style="left:776.3px;top:30.5px;width:17.6px;height:31.5px;background:#4a4a4a"></div>
<div class="a" style="left:776.3px;top:62.8px;width:17.6px;height:33.7px;background:#4a4a4a"></div>
<div class="a" style="left:776.3px;top:97.3px;width:17.6px;height:33.0px;background:#4a4a4a"></div>
<div class="a" style="left:776.3px;top:131.1px;width:17.6px;height:19.0px;background:#4a4a4a"></div>
<div class="a" style="left:776.3px;top:150.9px;width:17.6px;height:19.8px;background:#4a4a4a"></div>
<div class="a" style="left:776.3px;top:171.5px;width:17.6px;height:19.0px;background:#4a4a4a"></div>
<div class="a" style="left:776.3px;top:191.3px;width:17.6px;height:18.7px;background:#4a4a4a"></div>
<div class="a" style="left:776.3px;top:210.8px;width:17.6px;height:19.7px;background:#4a4a4a"></div>
<div class="a" style="left:776.3px;top:231.3px;width:17.6px;height:18.9px;background:#4a4a4a"></div>
<div class="a" style="left:776.3px;top:251.0px;width:17.6px;height:209.0px;background:#4a4a4a"></div>
<svg class="a" style="left:780.5px;top:35.8px;" width="10" height="10" viewBox="0 0 10 10"><g fill="#e8e8e8"><rect x="0.5" y="0.5" width="3.2" height="9" rx="0.6"/></g><g fill="#4a4a4a"><rect x="1.4" y="1.5" width="1.4" height="1.3"/><rect x="1.4" y="4" width="1.4" height="1.3"/></g><path d="M6 1.8 Q9.3 4.5 6.3 8.6" stroke="#e8e8e8" stroke-width="1.2" fill="none"/><path d="M5.2 0.6 L7.6 1.6 L5.6 3.2Z" fill="#e8e8e8"/></svg>
<svg class="a" style="left:781.8px;top:50.8px;" width="8" height="7" viewBox="0 0 8 7"><path d="M0.3 0.2 L7.2 3.5 L0.3 6.8Z" fill="#e8e8e8"/></svg>
<svg class="a" style="left:779.5px;top:68.8px;" width="10" height="10" viewBox="0 0 10 10"><g fill="#e8e8e8"><rect x="0.6" y="0.5" width="0.8" height="2.6"/><rect x="2.1" y="0.5" width="0.8" height="2.6"/><path d="M8.3 0.5 L9.6 1.7 L5 6.8 L3.6 5.5Z"/><path d="M3.1 5.8 L4.7 7.3 Q4.2 9.6 0.6 9.6 Q2.2 8.2 3.1 5.8Z"/></g></svg>
<svg class="a" style="left:779.5px;top:83px;" width="10" height="9" viewBox="0 0 10 9"><g fill="#e8e8e8"><rect x="0.5" y="1.4" width="8.5" height="1"/><rect x="0.5" y="5.9" width="8.5" height="1"/><circle cx="2.3" cy="1.9" r="1.5"/><path d="M6 3.7 L9.5 3.7 L9.5 8.7 L6 8.7 Q4.6 6.2 6 3.7Z"/></g></svg>
<div class="t" style="left:780.4px;top:104px;font-size:8.3px;color:#e8e8e8">A</div>
<div class="a" style="left:787.6px;top:102.8px;width:0.8px;height:8.2px;background:#e8e8e8"></div>
<svg class="a" style="left:781.2px;top:115.5px;" width="8" height="9" viewBox="0 0 8 9"><path d="M3.5 0.5 L7.5 0.5 L7.5 8.5 L6.3 8.5 L6.3 1.6 L5.5 1.6 L5.5 8.5 L4.3 8.5 L4.3 5 Q0.5 5 0.5 2.8 Q0.5 0.5 3.5 0.5Z" fill="#e8e8e8"/></svg>
<svg class="a" style="left:780.8px;top:136.8px;" width="9" height="8" viewBox="0 0 9 8"><rect x="0.6" y="0.6" width="7.8" height="6.6" fill="none" stroke="#e8e8e8" stroke-width="0.9"/><path d="M1.8 6.3 L2.8 3.6 L3.9 5.2 L5 3 L7.2 6.3Z" fill="#e8e8e8"/></svg>
<svg class="a" style="left:780px;top:156.5px;" width="10" height="10" viewBox="0 0 10 10"><g fill="#e8e8e8"><rect x="0.5" y="1.3" width="9" height="0.7"/><rect x="0.5" y="3.8" width="9" height="0.7"/><rect x="0.5" y="6.3" width="9" height="0.7"/><rect x="0.5" y="8.8" width="9" height="0.7"/><ellipse cx="4.6" cy="1.6" rx="1.5" ry="1"/><ellipse cx="2.4" cy="4.1" rx="1.5" ry="1"/><ellipse cx="4.6" cy="6.6" rx="1.5" ry="1"/><ellipse cx="2.4" cy="9.1" rx="1.5" ry="1"/></g></svg>
<svg class="a" style="left:780.5px;top:176px;" width="9" height="10" viewBox="0 0 9 10"><path d="M3 0.5 L0.8 4 L1.2 7 L6 9.5 L8.5 7.5 Q5 7 3 0.5Z" fill="#e8e8e8"/><path d="M3.2 3.2 L4 7.6 L7.6 7.6" fill="#c8c8c8"/></svg>
<svg class="a" style="left:781px;top:196.2px;" width="8" height="10" viewBox="0 0 8 10"><path d="M2.6 0.6 L3.3 4.6 L5.5 3.2 L7.4 5.2 L6.9 8 Q5.5 9.8 3.5 9.5 Q1 9 1 6.5 L1.2 4.6 Z" fill="#e8e8e8"/><path d="M5.3 0.9 L6.1 0.7 L6.2 2.6Z" fill="#e8e8e8"/></svg>
<svg class="a" style="left:780.5px;top:216.6px;" width="9" height="9" viewBox="0 0 9 9"><rect x="0.5" y="0.5" width="4" height="4" fill="#e8e8e8"/><path d="M5.5 2.2 L8.5 2.2 L8.5 8.5 L2.2 8.5 L2.2 5.5 L5.5 5.5Z" fill="#e8e8e8"/></svg>
<svg class="a" style="left:780.5px;top:236.5px;" width="10" height="10" viewBox="0 0 10 10"><g stroke="#e8e8e8" stroke-width="0.8"><line x1="5" y1="0.5" x2="5" y2="9.5"/><line x1="0.5" y1="5" x2="9.5" y2="5"/><line x1="1.8" y1="1.8" x2="8.2" y2="8.2"/><line x1="8.2" y1="1.8" x2="1.8" y2="8.2"/></g><circle cx="5" cy="5" r="1.8" fill="#e8e8e8"/></svg>
<div class="a" style="left:795px;top:28.9px;width:104px;height:13.6px;background:#3e3e3e"></div>
<div class="t" style="left:799.6px;top:34px;font-size:5.08px;transform-origin:0 0;transform:scaleX(1.03);color:#c4c4c4">Color</div>
<div class="t" style="left:816.8px;top:34px;font-size:5.08px;transform-origin:0 0;transform:scaleX(0.926);color:#c4c4c4">Swatches</div>
<div class="a" style="left:838.2px;top:28.9px;width:32px;height:13.6px;background:#4a4a4a"></div>
<div class="t" style="left:841.9px;top:34px;font-size:5.08px;transform-origin:0 0;transform:scaleX(0.951);color:#f6f6f6;font-weight:bold">Histogram</div>
<div class="a" style="left:874.6px;top:28px;width:20.6px;height:14px;overflow:hidden">
<div class="t" style="left:0px;top:6px;font-size:5.08px;transform-origin:0 0;transform:scaleX(1.127);color:#c4c4c4">Navigator</div>
</div>
<div class="a" style="left:795px;top:42.5px;width:104px;height:47.8px;background:#4a4a4a"></div>
<div class="a" style="left:796.2px;top:44.8px;width:95.8px;height:43.4px;background:#454545;border:0.8px solid #515151"></div>
<div class="a" style="left:892.8px;top:44.8px;width:6.2px;height:43.4px;background:#474747"></div>
<svg class="a" style="left:884.6px;top:49.6px;" width="7" height="6.5" viewBox="0 0 7 6.5"><path d="M3.5 0.3 L6.8 6.2 L0.2 6.2Z" fill="#f2f2f2"/><rect x="3.1" y="2" width="0.8" height="2.4" fill="#333"/><rect x="3.1" y="4.9" width="0.8" height="0.8" fill="#333"/></svg>
<div class="a" style="left:795px;top:89.5px;width:104px;height:0.8px;background:#3a3a3a"></div>
<div class="a" style="left:795px;top:90.3px;width:104px;height:15px;background:#3e3e3e"></div>
<div class="a" style="left:796px;top:90.6px;width:36.5px;height:14.7px;background:#4a4a4a"></div>
<div class="t" style="left:799.8px;top:97px;font-size:4.8px;transform-origin:0 0;transform:scaleX(0.998);color:#f6f6f6;font-weight:bold">Adjustments</div>
<div class="a" style="left:795px;top:105.3px;width:104px;height:354px;background:#4a4a4a"></div>
<div class="a" style="left:795px;top:105.3px;width:104px;height:14.8px;background:#3e3e3e"></div>
<div class="a" style="left:796px;top:105.8px;width:22px;height:14.3px;background:#4a4a4a"></div>
<div class="t" style="left:799.8px;top:112px;font-size:4.8px;transform-origin:0 0;transform:scaleX(0.912);color:#f6f6f6;font-weight:bold">Layers</div>
<div class="t" style="left:822.6px;top:112px;font-size:4.8px;transform-origin:0 0;transform:scaleX(1.006);color:#c4c4c4">Channels</div>
<div class="t" style="left:851.8px;top:112px;font-size:4.8px;transform-origin:0 0;transform:scaleX(1.002);color:#c4c4c4">Paths</div>
<div class="a" style="left:798.7px;top:125.3px;width:39.7px;height:9.9px;background:#464646;border:0.6px solid #424242"></div>
<svg class="a" style="left:800.6px;top:127.4px;" width="6" height="6" viewBox="0 0 6 6"><g fill="none" stroke="#b0b0b0" stroke-width="0.9"><circle cx="2.4" cy="2.4" r="1.8"/><line x1="3.7" y1="3.7" x2="5.5" y2="5.5"/></g></svg>
<div class="t" style="left:808px;top:128px;font-size:5.0px;color:#7a7a7a">Kind</div>
<svg class="a" style="left:834.5px;top:130px;" width="3.4" height="2.4" viewBox="0 0 3.4 2.4"><path d="M0.6 0.6 L1.7 1.4 L2.8 0.6" stroke="#777" stroke-width="0.6" fill="none"/></svg>
<div class="a" style="left:840.5px;top:123px;width:0.6px;height:14px;background:#424242"></div>
<svg class="a" style="left:845.4px;top:127px;" width="6" height="6" viewBox="0 0 6 6"><rect x="0.4" y="0.4" width="5.2" height="5" fill="none" stroke="#bcbcbc" stroke-width="0.8"/><path d="M1.2 4.7 L2.5 2.6 L3.3 3.6 L4.1 2.6 L5 4.7Z" fill="#bcbcbc"/></svg>
<svg class="a" style="left:858.3px;top:127.3px;" width="6" height="6" viewBox="0 0 6 6"><circle cx="3" cy="3" r="2.6" fill="#bcbcbc"/><path d="M0.8 4.4 A2.6 2.6 0 0 0 5.2 1.6 Q3 1.8 0.8 4.4Z" fill="#6a6a6a"/></svg>
<div class="t" style="left:870.2px;top:128px;font-size:6.6px;color:#bcbcbc;font-weight:bold">T</div>
<svg class="a" style="left:881.3px;top:126.8px;" width="6" height="6" viewBox="0 0 6 6"><rect x="1.2" y="1.2" width="3.6" height="3.6" fill="none" stroke="#bcbcbc" stroke-width="0.7"/><g fill="#bcbcbc"><rect x="0" y="0" width="1.4" height="1.4"/><rect x="4.6" y="0" width="1.4" height="1.4"/><rect x="0" y="4.6" width="1.4" height="1.4"/><rect x="4.6" y="4.6" width="1.4" height="1.4"/></g></svg>
<svg class="a" style="left:893px;top:126.3px;" width="6" height="8" viewBox="0 0 6 8"><path d="M1.5 0.5 L4 0.5 L5.5 2 L5.5 7.5 L1.5 7.5Z" fill="none" stroke="#bcbcbc" stroke-width="0.8"/><rect x="0" y="4" width="3.6" height="3.6" fill="#bcbcbc"/></svg>
<div class="a" style="left:795px;top:137px;width:104px;height:0.6px;background:#444"></div>
<div class="a" style="left:798.7px;top:139.3px;width:60.7px;height:9.3px;background:#464646;border:0.6px solid #424242"></div>
<div class="t" style="left:801px;top:143px;font-size:4.65px;color:#7a7a7a">Normal</div>
<svg class="a" style="left:855px;top:143.5px;" width="3.4" height="2.4" viewBox="0 0 3.4 2.4"><path d="M0.6 0.6 L1.7 1.4 L2.8 0.6" stroke="#777" stroke-width="0.6" fill="none"/></svg>
<div class="t" style="left:862.9px;top:143px;font-size:4.91px;color:#7a7a7a">Opacity:</div>
<div class="a" style="left:884px;top:139.3px;width:15px;height:9.3px;background:#464646;border:0.6px solid #424242"></div>
<div class="t" style="left:886px;top:142px;font-size:4.6px;color:#6c6c6c">100%</div>
<div class="t" style="left:798px;top:154px;font-size:5.02px;color:#7a7a7a">Lock:</div>
<svg class="a" style="left:814px;top:153.8px;" width="6" height="6" viewBox="0 0 6 6"><rect x="0.4" y="0.4" width="5.2" height="5.2" fill="none" stroke="#c0c0c0" stroke-width="0.7"/><g fill="#c0c0c0"><rect x="0.5" y="0.5" width="1.7" height="1.7"/><rect x="3.8" y="0.5" width="1.7" height="1.7"/><rect x="2.2" y="2.2" width="1.6" height="1.6"/><rect x="0.5" y="3.8" width="1.7" height="1.7"/><rect x="3.8" y="3.8" width="1.7" height="1.7"/></g></svg>
<svg class="a" style="left:825px;top:153.5px;" width="7" height="7" viewBox="0 0 7 7"><path d="M6.5 0.5 L2.8 4.6" stroke="#c0c0c0" stroke-width="1" fill="none"/><path d="M2.6 4.4 L3.3 5.1 Q2.5 6.5 0.5 6.7 Q1.4 5.5 2.6 4.4Z" fill="#c0c0c0"/></svg>
<svg class="a" style="left:835.5px;top:153.3px;" width="7" height="7" viewBox="0 0 7 7"><g stroke="#c0c0c0" stroke-width="0.7"><line x1="3.5" y1="0.8" x2="3.5" y2="6.2"/><line x1="0.8" y1="3.5" x2="6.2" y2="3.5"/></g><path d="M3.5 0 L2.6 1.2 L4.4 1.2Z M3.5 7 L2.6 5.8 L4.4 5.8Z M0 3.5 L1.2 2.6 L1.2 4.4Z M7 3.5 L5.8 2.6 L5.8 4.4Z" fill="#c0c0c0"/></svg>
<svg class="a" style="left:846px;top:153.5px;" width="7" height="7" viewBox="0 0 7 7"><g fill="none" stroke="#c0c0c0" stroke-width="0.7"><path d="M1.5 0 L1.5 5.5 L7 5.5 M0 1.5 L5.5 1.5 L5.5 7"/><line x1="2.2" y1="2.2" x2="5" y2="5"/></g></svg>
<svg class="a" style="left:857.5px;top:153px;" width="6" height="8" viewBox="0 0 6 8"><path d="M1.5 3.5 L1.5 2.2 Q3 -0.2 4.5 2.2 L4.5 3.5" stroke="#c0c0c0" stroke-width="0.8" fill="none"/><rect x="0.5" y="3.5" width="5" height="4.2" fill="#c0c0c0"/></svg>
<div class="t" style="left:874.5px;top:154px;font-size:5.14px;color:#7a7a7a">Fill:</div>
<div class="a" style="left:884px;top:153.9px;width:15px;height:8.7px;background:#464646;border:0.6px solid #424242"></div>
<div class="t" style="left:886px;top:156px;font-size:4.6px;color:#6c6c6c">100%</div>
<div class="a" style="left:795px;top:164.2px;width:104px;height:0.6px;background:#3e3e3e"></div>
<div class="a" style="left:809.7px;top:164.6px;width:89.3px;height:18.7px;background:#5d5d5d"></div>
<div class="a" style="left:795px;top:183.3px;width:104px;height:0.7px;background:#3c3c3c"></div>
<svg class="a" style="left:799.2px;top:172.2px;" width="8" height="5" viewBox="0 0 8 5"><path d="M0.3 2.5 Q4 -1 7.7 2.5 Q4 6 0.3 2.5Z" fill="#eaeaea"/><circle cx="4" cy="2.5" r="1.2" fill="#4a4a4a"/></svg>
<div class="a" style="left:812px;top:166.6px;width:15.3px;height:15.7px;background:#fff;border:0.6px solid #3a3a3a"></div>
<div class="t" style="left:832px;top:174px;font-size:4.94px;transform-origin:0 0;transform:scaleX(1.024);color:#f0f0f0;font-style:italic">Background</div>
<svg class="a" style="left:892.5px;top:171px;" width="6" height="7" viewBox="0 0 6 7"><path d="M1.5 3 L1.5 2 Q3 -0.3 4.5 2 L4.5 3" stroke="#eaeaea" stroke-width="0.8" fill="none"/><rect x="0.8" y="3" width="4.4" height="3.7" fill="none" stroke="#eaeaea" stroke-width="0.8"/></svg>
<svg class="a" style="left:549px;top:177.5px;" width="6" height="9" viewBox="0 0 6 9"><path d="M0.5 0.5 L0.5 7.2 L2.1 5.8 L3.2 8.3 L4.3 7.9 L3.2 5.4 L5.2 5.4Z" fill="#fff" stroke="#111" stroke-width="0.6"/></svg>
</div></body></html>
